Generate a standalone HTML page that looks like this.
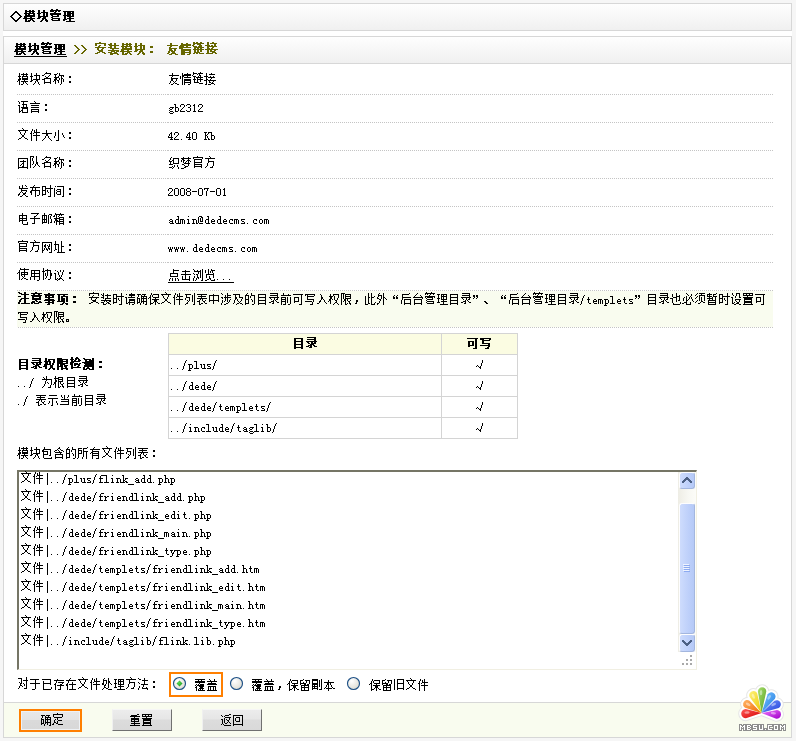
<!DOCTYPE html>
<html><head><meta charset="utf-8"><title>模块管理</title>
<style>
html,body{margin:0;padding:0}
body{width:796px;height:741px;overflow:hidden;position:relative;background:#f6f6f6;font-family:"Liberation Sans",sans-serif;font-size:12px}
.t{position:absolute;white-space:nowrap;overflow:hidden;height:14px;line-height:14px;color:transparent}
.gl{position:absolute;left:0;top:0;shape-rendering:crispEdges;pointer-events:none}
</style></head><body>
<div style="position:absolute;left:3px;top:3px;width:789px;height:735px;background:#fff"></div>
<div style="position:absolute;left:3px;top:3px;width:789px;height:28px;box-sizing:border-box;border:1px solid #d7d7d7;background:linear-gradient(#fefefe,#f0f0f0)"></div>
<div style="position:absolute;left:3px;top:36px;width:789px;height:702px;box-sizing:border-box;border:1px solid #d7d7d7;background:#fff"></div>
<div style="position:absolute;left:4px;top:37px;width:787px;height:27px;box-sizing:border-box;border-bottom:1px solid #d7d7d7;background:linear-gradient(#fefefe,#f0f0f0)"></div>
<div style="position:absolute;left:17px;top:94px;width:151px;height:1px;background:repeating-linear-gradient(to right,#c4c4c4 0 1px,transparent 1px 2px)"></div>
<div style="position:absolute;left:168px;top:94px;width:605px;height:1px;background:repeating-linear-gradient(to right,#c4c4c4 0 1px,transparent 1px 2px)"></div>
<div style="position:absolute;left:17px;top:122px;width:151px;height:1px;background:repeating-linear-gradient(to right,#c4c4c4 0 1px,transparent 1px 2px)"></div>
<div style="position:absolute;left:168px;top:122px;width:605px;height:1px;background:repeating-linear-gradient(to right,#c4c4c4 0 1px,transparent 1px 2px)"></div>
<div style="position:absolute;left:17px;top:150px;width:151px;height:1px;background:repeating-linear-gradient(to right,#c4c4c4 0 1px,transparent 1px 2px)"></div>
<div style="position:absolute;left:168px;top:150px;width:605px;height:1px;background:repeating-linear-gradient(to right,#c4c4c4 0 1px,transparent 1px 2px)"></div>
<div style="position:absolute;left:17px;top:178px;width:151px;height:1px;background:repeating-linear-gradient(to right,#c4c4c4 0 1px,transparent 1px 2px)"></div>
<div style="position:absolute;left:168px;top:178px;width:605px;height:1px;background:repeating-linear-gradient(to right,#c4c4c4 0 1px,transparent 1px 2px)"></div>
<div style="position:absolute;left:17px;top:206px;width:151px;height:1px;background:repeating-linear-gradient(to right,#c4c4c4 0 1px,transparent 1px 2px)"></div>
<div style="position:absolute;left:168px;top:206px;width:605px;height:1px;background:repeating-linear-gradient(to right,#c4c4c4 0 1px,transparent 1px 2px)"></div>
<div style="position:absolute;left:17px;top:234px;width:151px;height:1px;background:repeating-linear-gradient(to right,#c4c4c4 0 1px,transparent 1px 2px)"></div>
<div style="position:absolute;left:168px;top:234px;width:605px;height:1px;background:repeating-linear-gradient(to right,#c4c4c4 0 1px,transparent 1px 2px)"></div>
<div style="position:absolute;left:17px;top:262px;width:151px;height:1px;background:repeating-linear-gradient(to right,#c4c4c4 0 1px,transparent 1px 2px)"></div>
<div style="position:absolute;left:168px;top:262px;width:605px;height:1px;background:repeating-linear-gradient(to right,#c4c4c4 0 1px,transparent 1px 2px)"></div>
<div style="position:absolute;left:17px;top:290px;width:151px;height:1px;background:repeating-linear-gradient(to right,#c4c4c4 0 1px,transparent 1px 2px)"></div>
<div style="position:absolute;left:168px;top:290px;width:605px;height:1px;background:repeating-linear-gradient(to right,#c4c4c4 0 1px,transparent 1px 2px)"></div>
<div style="position:absolute;left:18px;top:327px;width:755px;height:1px;background:repeating-linear-gradient(to right,#c4c4c4 0 1px,transparent 1px 2px)"></div>
<div style="position:absolute;left:17px;top:291px;width:756px;height:36px;background:#f9fcef"></div>
<div style="position:absolute;left:168px;top:333px;width:350px;height:106px;box-sizing:border-box;border:1px solid #d4d4d4;background:#fff"></div>
<div style="position:absolute;left:169px;top:334px;width:348px;height:20px;background:#fbfce2"></div>
<div style="position:absolute;left:169px;top:354px;width:348px;height:1px;background:#d4d4d4"></div>
<div style="position:absolute;left:169px;top:375px;width:348px;height:1px;background:#d4d4d4"></div>
<div style="position:absolute;left:169px;top:396px;width:348px;height:1px;background:#d4d4d4"></div>
<div style="position:absolute;left:169px;top:417px;width:348px;height:1px;background:#d4d4d4"></div>
<div style="position:absolute;left:441px;top:334px;width:1px;height:104px;background:#d4d4d4"></div>
<div style="position:absolute;left:17px;top:470px;width:680px;height:200px;box-sizing:border-box;border-style:solid;border-width:2px 1px 1px 2px;border-color:#757565 #f1efe2 #f1efe2 #757565;background:#fff"></div>
<div style="position:absolute;left:4px;top:702px;width:787px;height:1px;background:#d7d7d7"></div>
<div style="position:absolute;left:4px;top:703px;width:787px;height:34px;background:#f9fcef"></div>
<div style="position:absolute;left:19px;top:709px;width:63px;height:23px;box-sizing:border-box;border:2px solid #ff7f00"></div>
<div style="position:absolute;left:21px;top:711px;width:59px;height:19px;box-sizing:border-box;border:1px solid #eef2f6;background:linear-gradient(#e8e8e8 0,#e4e4e4 45%,#dadada 50%,#d8d8d8 100%)"></div>
<div style="position:absolute;left:112px;top:709px;width:60px;height:22px;box-sizing:border-box;border-style:solid;border-width:1px 1px 1px 1px;border-color:#f6f6f6 #707070 #707070 #f0f0f0;background:linear-gradient(#ececec 0,#e6e6e6 45%,#dcdcdc 50%,#d9d9d9 100%)"></div>
<div style="position:absolute;left:202px;top:709px;width:60px;height:22px;box-sizing:border-box;border-style:solid;border-width:1px 1px 1px 1px;border-color:#f6f6f6 #707070 #707070 #f0f0f0;background:linear-gradient(#ececec 0,#e6e6e6 45%,#dcdcdc 50%,#d9d9d9 100%)"></div>
<div style="position:absolute;left:169px;top:672px;width:54px;height:25px;box-sizing:border-box;border:2px solid #ff7f00"></div>
<div style="position:absolute;left:678px;top:472px;width:18px;height:180px;background:linear-gradient(90deg,#eeede5,#f8f8f3 60%,#fcfcf8)"></div>
<div style="position:absolute;left:679px;top:472px;width:16px;height:17px;box-sizing:border-box;border:1px solid;border-color:#fdfdff #a3b6de #a3b6de #fdfdff;border-radius:3px;background:linear-gradient(90deg,#cedcfd,#bed0fa 60%,#b5c9f7)"></div>
<div style="position:absolute;left:679px;top:503px;width:16px;height:131px;box-sizing:border-box;border:1px solid;border-color:#fdfdff #a3b6de #a3b6de #fdfdff;border-radius:3px;background:linear-gradient(90deg,#cedcfd,#bed0fa 60%,#b5c9f7)"></div>
<div style="position:absolute;left:679px;top:634px;width:16px;height:18px;box-sizing:border-box;border:1px solid;border-color:#fdfdff #a3b6de #a3b6de #fdfdff;border-radius:3px;background:linear-gradient(90deg,#cedcfd,#bed0fa 60%,#b5c9f7)"></div>
<div style="position:absolute;left:14px;top:56px;width:53px;height:1px;background:#000"></div>
<div style="position:absolute;left:168px;top:282px;width:66px;height:1px;background:#000"></div>
<span class="t" style="left:23px;top:9px;width:52px">模块管理</span>
<span class="t" style="left:14px;top:42px;width:52px">模块管理</span>
<span class="t" style="left:94px;top:42px;width:65px">安装模块：</span>
<span class="t" style="left:166px;top:42px;width:52px">友情链接</span>
<span class="t" style="left:17px;top:72px;width:60px">模块名称：</span>
<span class="t" style="left:168px;top:72px;width:48px">友情链接</span>
<span class="t" style="left:17px;top:100px;width:36px">语言：</span>
<span class="t" style="left:168px;top:100px;width:36px">gb2312</span>
<span class="t" style="left:17px;top:128px;width:60px">文件大小：</span>
<span class="t" style="left:168px;top:128px;width:48px">42.40 Kb</span>
<span class="t" style="left:17px;top:156px;width:60px">团队名称：</span>
<span class="t" style="left:168px;top:156px;width:48px">织梦官方</span>
<span class="t" style="left:17px;top:184px;width:60px">发布时间：</span>
<span class="t" style="left:168px;top:184px;width:60px">2008-07-01</span>
<span class="t" style="left:17px;top:212px;width:60px">电子邮箱：</span>
<span class="t" style="left:168px;top:212px;width:102px">admin@dedecms.com</span>
<span class="t" style="left:17px;top:240px;width:60px">官方网址：</span>
<span class="t" style="left:168px;top:240px;width:90px">www.dedecms.com</span>
<span class="t" style="left:17px;top:268px;width:60px">使用协议：</span>
<span class="t" style="left:168px;top:268px;width:66px">点击浏览...</span>
<span class="t" style="left:17px;top:292px;width:65px">注意事项：</span>
<span class="t" style="left:88px;top:292px;width:678px">安装时请确保文件列表中涉及的目录前可写入权限，此外“后台管理目录”、“后台管理目录/templets”目录也必须暂时设置可</span>
<span class="t" style="left:17px;top:310px;width:60px">写入权限。</span>
<span class="t" style="left:17px;top:357px;width:91px">目录权限检测：</span>
<span class="t" style="left:17px;top:375px;width:72px">../ 为根目录</span>
<span class="t" style="left:17px;top:393px;width:90px">./ 表示当前目录</span>
<span class="t" style="left:292px;top:336px;width:26px">目录</span>
<span class="t" style="left:466px;top:336px;width:26px">可写</span>
<span class="t" style="left:170px;top:357px;width:48px">../plus/</span>
<span class="t" style="left:170px;top:378px;width:48px">../dede/</span>
<span class="t" style="left:170px;top:399px;width:102px">../dede/templets/</span>
<span class="t" style="left:170px;top:420px;width:108px">../include/taglib/</span>
<span class="t" style="left:17px;top:446px;width:144px">模块包含的所有文件列表：</span>
<span class="t" style="left:20px;top:471px;width:156px">文件|../plus/flink_add.php</span>
<span class="t" style="left:20px;top:489px;width:186px">文件|../dede/friendlink_add.php</span>
<span class="t" style="left:20px;top:507px;width:192px">文件|../dede/friendlink_edit.php</span>
<span class="t" style="left:20px;top:525px;width:192px">文件|../dede/friendlink_main.php</span>
<span class="t" style="left:20px;top:543px;width:192px">文件|../dede/friendlink_type.php</span>
<span class="t" style="left:20px;top:561px;width:240px">文件|../dede/templets/friendlink_add.htm</span>
<span class="t" style="left:20px;top:579px;width:246px">文件|../dede/templets/friendlink_edit.htm</span>
<span class="t" style="left:20px;top:597px;width:246px">文件|../dede/templets/friendlink_main.htm</span>
<span class="t" style="left:20px;top:615px;width:246px">文件|../dede/templets/friendlink_type.htm</span>
<span class="t" style="left:20px;top:633px;width:216px">文件|../include/taglib/flink.lib.php</span>
<span class="t" style="left:17px;top:677px;width:144px">对于已存在文件处理方法：</span>
<span class="t" style="left:194px;top:678px;width:24px">覆盖</span>
<span class="t" style="left:251px;top:678px;width:84px">覆盖，保留副本</span>
<span class="t" style="left:369px;top:678px;width:60px">保留旧文件</span>
<span class="t" style="left:40px;top:713px;width:24px">确定</span>
<span class="t" style="left:129px;top:713px;width:24px">重置</span>
<span class="t" style="left:220px;top:713px;width:24px">返回</span>
<svg class="gl" width="796" height="741" viewBox="0 0 796 741"><defs><path id="g0" d="M2 -1h2v1h-2zM6 -1h2v1h-2zM9 -1h2v1h-2zM2 0h10v1h-10zM2 1h2v1h-2zM6 1h2v1h-2zM9 1h2v1h-2zM1 2h11v1h-11zM2 3h2v1h-2zM5 3h2v1h-2zM10 3h2v1h-2zM2 4h10v1h-10zM1 5h11v1h-11zM1 6h3v1h-3zM7 6h2v1h-2zM0 7h12v1h-12zM2 8h2v2h-2zM7 8h3v1h-3zM5 9h3v1h-3zM9 9h2v1h-2zM2 10h5v1h-5zM10 10h2v1h-2z"/><path id="g1" d="M2 -1h2v3h-2zM7 -1h2v2h-2zM5 1h7v1h-7zM1 2h4v1h-4zM7 2h2v3h-2zM10 2h2v3h-2zM2 3h2v2h-2zM2 5h10v1h-10zM2 6h3v1h-3zM7 6h3v1h-3zM1 7h3v1h-3zM6 7h4v1h-4zM6 8h2v1h-2zM9 8h2v1h-2zM5 9h2v1h-2zM9 9h3v1h-3zM4 10h2v1h-2zM10 10h2v1h-2z"/><path id="g2" d="M2 -2h2v1h-2zM7 -2h2v1h-2zM1 -1h11v1h-11zM1 0h4v1h-4zM6 0h2v1h-2zM9 0h2v1h-2zM5 1h2v1h-2zM1 2h11v2h-11zM2 4h2v1h-2zM8 4h2v1h-2zM3 5h7v1h-7zM2 6h2v1h-2zM3 7h8v1h-8zM2 8h2v1h-2zM9 8h2v1h-2zM3 9h8v1h-8z"/><path id="g3" d="M1 0h11v1h-11zM2 1h2v3h-2zM5 1h4v1h-4zM10 1h2v1h-2zM5 2h7v1h-7zM5 3h4v1h-4zM10 3h2v2h-2zM1 4h8v1h-8zM2 5h2v3h-2zM5 5h7v1h-7zM7 6h2v1h-2zM5 7h7v1h-7zM1 8h4v1h-4zM7 8h2v2h-2zM1 9h2v1h-2zM4 10h9v1h-9z"/><path id="g4" d="M5 -2h2v1h-2zM1 -1h11v1h-11zM1 0h2v2h-2zM10 0h2v2h-2zM5 1h2v1h-2zM4 2h2v1h-2zM1 3h11v1h-11zM3 4h2v2h-2zM8 4h2v1h-2zM7 5h2v1h-2zM4 6h5v1h-5zM5 7h4v1h-4zM3 8h3v1h-3zM8 8h3v1h-3zM1 9h3v1h-3zM10 9h2v1h-2z"/><path id="g5" d="M3 -1h2v1h-2zM7 -1h2v2h-2zM1 0h4v1h-4zM2 1h10v1h-10zM3 2h2v1h-2zM7 2h2v2h-2zM1 3h4v1h-4zM3 4h9v1h-9zM5 5h2v1h-2zM1 6h11v1h-11zM4 7h4v1h-4zM9 7h3v1h-3zM1 8h4v1h-4zM7 8h3v1h-3zM3 9h8v1h-8zM3 10h3v1h-3zM10 10h2v1h-2z"/><path id="g6" d="M4 2h3v2h-3zM4 7h3v2h-3z"/><path id="g7" d="M4 -1h2v2h-2zM1 1h11v1h-11zM4 2h2v1h-2zM3 3h2v1h-2zM3 4h8v1h-8zM3 5h3v1h-3zM8 5h2v2h-2zM3 6h4v1h-4zM2 7h2v2h-2zM5 7h4v1h-4zM6 8h3v1h-3zM1 9h2v1h-2zM5 9h5v1h-5zM3 10h3v1h-3zM9 10h3v1h-3z"/><path id="g8" d="M2 -1h2v1h-2zM7 -1h2v1h-2zM2 0h10v1h-10zM1 1h11v1h-11zM0 2h5v1h-5zM7 2h2v1h-2zM0 3h12v1h-12zM0 4h4v1h-4zM2 5h10v2h-10zM2 7h4v1h-4zM10 7h2v1h-2zM2 8h10v1h-10zM2 9h4v2h-4zM10 9h2v1h-2zM8 10h3v1h-3z"/><path id="g9" d="M1 -2h2v1h-2zM4 -2h2v1h-2zM8 -2h2v1h-2zM1 -1h11v1h-11zM1 0h2v1h-2zM5 0h4v1h-4zM0 1h2v1h-2zM7 1h3v1h-3zM1 2h4v1h-4zM6 2h4v1h-4zM2 3h10v1h-10zM2 4h2v1h-2zM5 4h2v1h-2zM8 4h2v1h-2zM1 5h11v1h-11zM2 6h2v2h-2zM5 6h2v2h-2zM8 6h2v2h-2zM2 8h6v1h-6zM1 9h2v1h-2zM4 9h2v1h-2zM7 9h5v1h-5z"/><path id="g10" d="M2 -2h2v3h-2zM7 -2h2v1h-2zM5 -1h7v1h-7zM9 0h2v2h-2zM0 1h5v1h-5zM6 1h2v1h-2zM2 2h10v1h-10zM2 3h2v1h-2zM7 3h2v1h-2zM2 4h3v1h-3zM6 4h2v1h-2zM0 5h13v1h-13zM2 6h2v3h-2zM5 6h2v1h-2zM9 6h2v1h-2zM5 7h5v1h-5zM7 8h4v1h-4zM1 9h7v1h-7zM10 9h2v1h-2z"/><path id="g11" d="M2 -1h1v3h-1zM6 -1h1v1h-1zM9 -1h1v1h-1zM4 0h7v1h-7zM6 1h1v1h-1zM9 1h1v1h-1zM1 2h3v1h-3zM5 2h6v1h-6zM2 3h1v1h-1zM5 3h1v1h-1zM10 3h1v1h-1zM2 4h2v1h-2zM5 4h6v2h-6zM1 5h3v1h-3zM1 6h2v1h-2zM7 6h1v1h-1zM0 7h1v1h-1zM2 7h1v4h-1zM4 7h7v1h-7zM6 8h1v2h-1zM8 8h1v1h-1zM9 9h1v1h-1zM4 10h2v1h-2zM10 10h1v1h-1z"/><path id="g12" d="M2 -1h1v3h-1zM7 -1h1v2h-1zM5 1h6v1h-6zM1 2h3v1h-3zM7 2h1v3h-1zM10 2h1v3h-1zM2 3h1v3h-1zM4 5h7v1h-7zM2 6h2v1h-2zM7 6h2v1h-2zM1 7h2v1h-2zM6 7h1v2h-1zM8 7h1v1h-1zM9 8h1v2h-1zM5 9h1v1h-1zM4 10h1v1h-1zM10 10h1v1h-1z"/><path id="g13" d="M5 -2h1v1h-1zM4 -1h6v1h-6zM3 0h1v1h-1zM9 0h1v1h-1zM1 1h2v1h-2zM8 1h1v1h-1zM4 2h1v1h-1zM7 2h1v1h-1zM5 3h2v1h-2zM3 4h7v1h-7zM1 5h3v1h-3zM9 5h1v3h-1zM3 6h1v2h-1zM3 8h7v1h-7zM3 9h1v1h-1zM9 9h1v1h-1z"/><path id="g14" d="M4 -1h1v1h-1zM6 -1h1v2h-1zM1 0h3v1h-3zM2 1h1v2h-1zM6 1h5v1h-5zM5 2h1v1h-1zM8 2h1v2h-1zM10 2h1v1h-1zM1 3h5v1h-5zM2 4h2v1h-2zM6 4h1v2h-1zM8 4h2v1h-2zM1 5h3v1h-3zM8 5h1v5h-1zM10 5h1v3h-1zM1 6h2v1h-2zM4 6h2v1h-2zM0 7h1v1h-1zM2 7h1v3h-1zM5 7h1v2h-1zM7 10h1v1h-1z"/><path id="g15" d="M4 2h2v2h-2zM4 7h2v2h-2z"/><path id="g16" d="M4 -1h1v2h-1zM1 1h10v1h-10zM4 2h1v1h-1zM3 3h1v1h-1zM3 4h7v1h-7zM3 5h2v2h-2zM8 5h1v2h-1zM2 7h1v2h-1zM5 7h1v1h-1zM7 7h1v1h-1zM6 8h1v1h-1zM1 9h1v1h-1zM5 9h1v1h-1zM7 9h2v1h-2zM3 10h2v1h-2zM9 10h2v1h-2z"/><path id="g17" d="M2 -1h1v2h-1zM7 -1h1v1h-1zM4 0h7v1h-7zM2 1h9v1h-9zM0 2h1v3h-1zM2 2h2v1h-2zM7 2h1v1h-1zM2 3h1v8h-1zM4 3h7v1h-7zM4 5h7v2h-7zM4 7h1v1h-1zM10 7h1v1h-1zM4 8h7v1h-7zM4 9h1v2h-1zM10 9h1v1h-1zM8 10h2v1h-2z"/><path id="g18" d="M1 -2h1v1h-1zM8 -2h1v1h-1zM1 -1h4v1h-4zM6 -1h5v1h-5zM1 0h1v1h-1zM5 0h1v1h-1zM7 0h1v1h-1zM0 1h1v1h-1zM7 1h2v1h-2zM1 2h3v1h-3zM6 2h1v1h-1zM8 2h1v1h-1zM2 3h1v2h-1zM4 3h7v1h-7zM5 4h1v1h-1zM8 4h1v1h-1zM1 5h3v1h-3zM5 5h6v1h-6zM2 6h1v2h-1zM5 6h1v2h-1zM8 6h1v2h-1zM2 8h5v1h-5zM7 9h4v1h-4z"/><path id="g19" d="M2 -1h1v3h-1zM7 -1h1v1h-1zM5 0h6v1h-6zM0 2h4v1h-4zM6 2h1v1h-1zM9 2h1v1h-1zM2 3h1v2h-1zM4 3h7v1h-7zM7 4h1v1h-1zM2 5h2v1h-2zM6 5h1v1h-1zM0 6h3v1h-3zM4 6h8v1h-8zM2 7h1v3h-1zM5 7h1v1h-1zM9 7h1v1h-1zM5 8h2v1h-2zM8 8h1v1h-1zM7 9h3v1h-3zM1 10h2v1h-2zM4 10h3v1h-3zM10 10h1v1h-1z"/><path id="g20" d="M1 -1h1v1h-1zM4 -1h7v1h-7zM2 0h1v2h-1zM6 0h1v2h-1zM5 2h5v1h-5zM1 3h2v1h-2zM6 3h1v2h-1zM9 3h1v2h-1zM2 4h1v5h-1zM4 5h7v1h-7zM5 6h6v1h-6zM5 7h1v1h-1zM10 7h1v3h-1zM4 8h2v1h-2zM2 9h2v1h-2zM5 9h1v1h-1zM2 10h1v1h-1zM5 10h6v1h-6z"/><path id="g21" d="M5 -1h1v1h-1zM6 0h1v1h-1zM1 1h10v1h-10zM2 3h8v1h-8zM2 5h8v1h-8zM2 7h8v1h-8zM2 8h1v1h-1zM9 8h1v1h-1zM2 9h8v1h-8zM2 10h1v1h-1zM9 10h1v1h-1z"/><path id="g22" d="M2 5h4v1h-4zM1 6h1v1h-1zM4 6h1v1h-1zM2 7h2v1h-2zM1 8h1v1h-1zM2 9h3v1h-3zM1 10h1v1h-1zM5 10h1v1h-1zM2 11h3v1h-3z"/><path id="g23" d="M0 2h2v1h-2zM1 3h1v2h-1zM1 5h3v1h-3zM1 6h1v3h-1zM4 6h1v3h-1zM1 9h3v1h-3z"/><path id="g24" d="M1 2h3v1h-3zM0 3h1v2h-1zM4 3h1v2h-1zM3 5h1v1h-1zM2 6h1v1h-1zM1 7h1v1h-1zM0 8h1v1h-1zM0 9h5v1h-5z"/><path id="g25" d="M1 2h3v1h-3zM0 3h1v1h-1zM4 3h1v2h-1zM2 5h2v1h-2zM4 6h1v3h-1zM0 8h1v1h-1zM1 9h3v1h-3z"/><path id="g26" d="M2 2h1v1h-1zM1 3h2v1h-2zM2 4h1v5h-1zM1 9h3v1h-3z"/><path id="g27" d="M5 -2h1v1h-1zM6 -1h1v1h-1zM1 0h10v1h-10zM2 1h1v1h-1zM8 1h1v2h-1zM3 2h1v2h-1zM7 3h1v2h-1zM4 4h1v1h-1zM5 5h2v2h-2zM4 7h1v1h-1zM7 7h1v1h-1zM2 8h2v1h-2zM8 8h2v1h-2zM1 9h1v1h-1zM10 9h1v1h-1z"/><path id="g28" d="M3 -1h1v2h-1zM7 -1h1v3h-1zM5 0h1v2h-1zM2 1h1v2h-1zM5 2h6v1h-6zM1 3h2v1h-2zM4 3h1v1h-1zM7 3h1v2h-1zM2 4h1v7h-1zM4 5h7v1h-7zM7 6h1v5h-1z"/><path id="g29" d="M5 0h1v3h-1zM1 3h10v1h-10zM5 4h2v2h-2zM4 6h1v2h-1zM7 6h1v2h-1zM3 8h1v1h-1zM8 8h1v1h-1zM2 9h1v1h-1zM9 9h1v1h-1zM1 10h1v1h-1zM10 10h1v1h-1z"/><path id="g30" d="M5 0h1v10h-1zM2 2h1v4h-1zM9 3h1v2h-1zM10 5h1v2h-1zM1 6h1v2h-1zM11 7h1v1h-1zM3 10h3v1h-3z"/><path id="g31" d="M3 2h1v1h-1zM2 3h2v1h-2zM1 4h1v2h-1zM3 4h1v3h-1zM0 6h1v1h-1zM0 7h5v1h-5zM3 8h1v1h-1zM2 9h3v1h-3z"/><path id="g32" d="M1 9h1v1h-1z"/><path id="g33" d="M1 2h3v1h-3zM0 3h1v6h-1zM4 3h1v6h-1zM1 9h3v1h-3z"/><path id="g34" d="M0 2h3v1h-3zM4 2h2v1h-2zM1 3h1v2h-1zM4 3h1v1h-1zM3 4h1v1h-1zM1 5h2v1h-2zM1 6h1v3h-1zM3 6h1v2h-1zM4 8h1v1h-1zM0 9h3v1h-3zM4 9h2v1h-2z"/><path id="g35" d="M1 0h10v1h-10zM1 1h1v8h-1zM10 1h1v8h-1zM6 2h1v1h-1zM3 3h6v1h-6zM6 4h1v1h-1zM5 5h2v1h-2zM4 6h1v1h-1zM6 6h1v2h-1zM3 7h1v1h-1zM5 8h2v1h-2zM1 9h10v1h-10zM1 10h1v1h-1zM10 10h1v1h-1z"/><path id="g36" d="M1 -2h4v1h-4zM7 -2h1v6h-1zM1 -1h1v11h-1zM4 -1h1v1h-1zM3 0h1v3h-1zM4 3h1v3h-1zM7 4h2v2h-2zM3 6h1v1h-1zM6 6h1v2h-1zM8 6h1v1h-1zM9 7h1v1h-1zM5 8h1v1h-1zM10 8h1v1h-1zM4 9h1v1h-1z"/><path id="g37" d="M3 -1h1v1h-1zM2 0h1v2h-1zM5 0h6v1h-6zM5 1h1v1h-1zM10 1h1v4h-1zM1 2h1v1h-1zM4 2h2v1h-2zM1 3h3v1h-3zM5 3h1v2h-1zM2 4h1v2h-1zM5 5h6v1h-6zM1 6h4v1h-4zM6 7h1v2h-1zM9 7h1v2h-1zM4 8h1v1h-1zM1 9h3v1h-3zM5 9h1v1h-1zM10 9h1v2h-1zM4 10h1v1h-1z"/><path id="g38" d="M3 -1h1v1h-1zM8 -1h1v1h-1zM1 0h10v1h-10zM2 1h2v1h-2zM8 1h1v1h-1zM1 2h1v2h-1zM3 2h2v1h-2zM7 2h3v1h-3zM3 3h1v2h-1zM6 3h1v1h-1zM8 3h1v2h-1zM10 3h1v1h-1zM5 4h1v1h-1zM4 5h6v1h-6zM2 6h2v1h-2zM8 6h1v2h-1zM4 7h1v1h-1zM5 8h3v1h-3zM4 9h2v1h-2zM1 10h3v1h-3z"/><path id="g39" d="M5 -2h1v1h-1zM1 -1h10v1h-10zM1 0h1v1h-1zM10 0h1v1h-1zM2 1h8v1h-8zM2 2h1v2h-1zM9 2h1v2h-1zM2 4h8v1h-8zM2 5h1v1h-1zM2 6h8v1h-8zM2 7h1v1h-1zM9 7h1v1h-1zM2 8h8v1h-8zM2 9h1v1h-1zM9 9h1v1h-1z"/><path id="g40" d="M5 -2h1v1h-1zM6 -1h1v1h-1zM1 0h10v1h-10zM4 1h1v2h-1zM4 3h6v1h-6zM4 4h1v1h-1zM9 4h1v4h-1zM3 5h1v3h-1zM2 8h1v1h-1zM8 8h1v1h-1zM1 9h1v1h-1zM6 9h3v1h-3z"/><path id="g41" d="M5 -1h1v3h-1zM8 -1h1v1h-1zM2 0h1v2h-1zM9 0h1v1h-1zM2 2h9v1h-9zM4 3h1v1h-1zM4 4h6v1h-6zM4 5h1v1h-1zM9 5h1v1h-1zM3 6h1v1h-1zM5 6h1v1h-1zM8 6h1v1h-1zM2 7h1v1h-1zM6 7h3v1h-3zM1 8h2v1h-2zM6 8h2v1h-2zM1 9h1v1h-1zM5 9h1v1h-1zM8 9h1v1h-1zM3 10h2v1h-2zM9 10h2v1h-2z"/><path id="g42" d="M5 -1h1v1h-1zM4 0h1v1h-1zM1 1h10v1h-10zM3 2h1v2h-1zM6 2h1v2h-1zM2 4h9v1h-9zM1 5h2v2h-2zM6 5h1v6h-1zM10 5h1v4h-1zM2 7h1v2h-1zM8 9h2v1h-2z"/><path id="g43" d="M9 -1h1v3h-1zM1 0h4v1h-4zM1 1h1v3h-1zM4 1h1v1h-1zM4 2h8v1h-8zM4 3h1v1h-1zM9 3h1v7h-1zM1 4h4v1h-4zM6 4h1v2h-1zM1 5h1v3h-1zM4 5h1v3h-1zM7 6h1v1h-1zM1 8h4v1h-4zM1 9h1v1h-1zM7 10h3v1h-3z"/><path id="g44" d="M2 0h1v1h-1zM4 0h7v1h-7zM10 1h1v9h-1zM1 2h1v9h-1zM4 3h4v1h-4zM3 4h1v1h-1zM7 4h1v1h-1zM4 5h4v1h-4zM3 6h1v2h-1zM7 6h1v2h-1zM4 8h4v1h-4zM9 10h2v1h-2z"/><path id="g45" d="M1 2h3v1h-3zM0 3h1v2h-1zM4 3h1v2h-1zM1 5h3v1h-3zM0 6h1v3h-1zM4 6h1v3h-1zM1 9h3v1h-3z"/><path id="g46" d="M0 5h5v1h-5z"/><path id="g47" d="M0 2h5v1h-5zM0 3h1v1h-1zM3 3h1v2h-1zM2 5h1v5h-1z"/><path id="g48" d="M5 -1h1v2h-1zM2 1h8v1h-8zM2 2h1v2h-1zM5 2h1v2h-1zM9 2h1v2h-1zM2 4h8v1h-8zM2 5h1v1h-1zM5 5h1v1h-1zM9 5h1v1h-1zM2 6h8v1h-8zM2 7h1v1h-1zM5 7h1v3h-1zM10 8h1v2h-1zM6 10h5v1h-5z"/><path id="g49" d="M2 -1h8v1h-8zM8 0h1v1h-1zM7 1h1v1h-1zM5 2h2v1h-2zM5 3h1v1h-1zM1 4h10v1h-10zM5 5h1v4h-1zM3 9h3v1h-3z"/><path id="g50" d="M3 -1h1v2h-1zM8 0h3v1h-3zM1 1h5v1h-5zM7 1h1v9h-1zM10 1h1v1h-1zM1 2h1v3h-1zM3 2h1v3h-1zM5 2h1v3h-1zM9 2h1v3h-1zM1 5h5v1h-5zM10 5h1v3h-1zM1 6h1v2h-1zM3 6h1v2h-1zM5 6h1v2h-1zM1 8h5v1h-5zM9 8h2v1h-2zM1 9h1v1h-1z"/><path id="g51" d="M2 -1h1v1h-1zM7 -1h1v1h-1zM2 0h9v1h-9zM1 1h1v1h-1zM3 1h1v3h-1zM6 1h1v1h-1zM8 1h1v1h-1zM0 2h2v1h-2zM5 2h1v1h-1zM6 3h5v1h-5zM1 4h6v1h-6zM10 4h1v1h-1zM2 5h2v1h-2zM6 5h5v1h-5zM2 6h3v1h-3zM6 6h1v1h-1zM10 6h1v1h-1zM1 7h1v2h-1zM3 7h8v1h-8zM3 8h1v3h-1zM6 8h1v1h-1zM10 8h1v1h-1zM6 9h5v1h-5zM6 10h1v1h-1zM10 10h1v1h-1z"/><path id="g52" d="M2 5h2v1h-2zM1 6h1v1h-1zM4 6h1v1h-1zM2 7h3v1h-3zM1 8h1v1h-1zM4 8h1v1h-1zM2 9h4v1h-4z"/><path id="g53" d="M3 2h2v1h-2zM4 3h1v2h-1zM2 5h3v1h-3zM1 6h1v3h-1zM4 6h1v3h-1zM2 9h4v1h-4z"/><path id="g54" d="M0 5h4v1h-4zM0 6h1v4h-1zM2 6h1v4h-1zM4 6h1v4h-1z"/><path id="g55" d="M2 2h1v1h-1zM1 5h2v1h-2zM2 6h1v3h-1zM1 9h3v1h-3z"/><path id="g56" d="M0 5h4v1h-4zM1 6h1v3h-1zM4 6h1v3h-1zM0 9h3v1h-3zM4 9h2v1h-2z"/><path id="g57" d="M1 2h3v1h-3zM0 3h1v6h-1zM3 3h2v1h-2zM2 4h1v3h-1zM4 4h1v3h-1zM2 7h3v1h-3zM1 9h4v1h-4z"/><path id="g58" d="M2 5h2v1h-2zM1 6h1v1h-1zM4 6h1v1h-1zM1 7h4v1h-4zM1 8h1v1h-1zM2 9h3v1h-3z"/><path id="g59" d="M2 5h3v1h-3zM1 6h1v3h-1zM4 6h1v1h-1zM2 9h3v1h-3z"/><path id="g60" d="M1 5h4v1h-4zM1 6h1v1h-1zM2 7h2v1h-2zM4 8h1v1h-1zM1 9h4v1h-4z"/><path id="g61" d="M2 5h2v1h-2zM1 6h1v3h-1zM4 6h1v3h-1zM2 9h2v1h-2z"/><path id="g62" d="M1 0h10v1h-10zM1 1h1v7h-1zM10 1h1v9h-1zM4 2h1v1h-1zM8 2h1v2h-1zM3 3h2v2h-2zM6 3h1v1h-1zM7 4h2v1h-2zM4 5h1v1h-1zM7 5h1v1h-1zM3 6h1v2h-1zM5 6h1v1h-1zM7 6h2v1h-2zM5 7h2v1h-2zM8 7h1v1h-1zM1 8h2v1h-2zM6 8h1v1h-1zM1 9h1v2h-1zM8 10h3v1h-3z"/><path id="g63" d="M2 -1h1v3h-1zM8 -1h1v5h-1zM1 2h5v1h-5zM2 3h1v4h-1zM5 3h1v7h-1zM8 4h3v1h-3zM8 5h1v5h-1zM2 7h2v1h-2zM1 8h1v1h-1zM4 10h8v1h-8z"/><path id="g64" d="M0 5h1v2h-1zM2 5h1v2h-1zM4 5h1v2h-1zM1 7h3v1h-3zM1 8h1v2h-1zM3 8h1v2h-1z"/><path id="g65" d="M3 -2h1v1h-1zM7 -2h1v1h-1zM3 -1h9v1h-9zM2 0h1v2h-1zM7 0h1v2h-1zM1 2h2v1h-2zM4 2h7v1h-7zM0 3h1v1h-1zM2 3h1v7h-1zM4 3h1v1h-1zM7 3h1v1h-1zM10 3h1v1h-1zM4 4h7v1h-7zM4 5h1v1h-1zM7 5h1v2h-1zM5 6h1v1h-1zM6 7h1v1h-1zM5 8h1v1h-1zM7 8h2v1h-2zM4 9h1v1h-1zM9 9h2v1h-2z"/><path id="g66" d="M2 0h9v1h-9zM2 1h1v2h-1zM5 1h1v2h-1zM10 1h1v2h-1zM2 3h9v1h-9zM2 4h1v2h-1zM5 4h1v2h-1zM10 4h1v2h-1zM2 6h9v1h-9zM1 7h1v3h-1zM5 7h1v3h-1zM10 7h1v3h-1zM8 10h2v1h-2z"/><path id="g67" d="M2 -2h1v3h-1zM6 -1h1v1h-1zM4 0h6v1h-6zM1 1h3v1h-3zM6 1h1v5h-1zM9 1h1v2h-1zM2 2h1v8h-1zM4 3h1v3h-1zM9 3h2v3h-2zM5 6h1v2h-1zM9 6h1v3h-1zM4 8h1v1h-1zM7 9h2v1h-2z"/><path id="g68" d="M2 0h1v1h-1zM7 0h1v2h-1zM10 0h1v2h-1zM4 1h1v1h-1zM5 2h1v3h-1zM9 2h1v3h-1zM1 3h2v1h-2zM2 4h1v5h-1zM6 5h1v2h-1zM8 5h1v2h-1zM7 7h1v1h-1zM4 8h1v1h-1zM6 8h3v1h-3zM2 9h2v1h-2zM5 9h2v1h-2zM9 9h1v1h-1zM4 10h1v1h-1zM10 10h1v1h-1z"/><path id="g69" d="M5 -1h1v1h-1zM5 0h6v1h-6zM5 1h1v2h-1zM2 3h8v1h-8zM2 4h1v2h-1zM9 4h1v2h-1zM2 6h8v1h-8zM2 8h1v1h-1zM4 8h1v3h-1zM7 8h1v3h-1zM9 8h1v1h-1zM1 9h1v2h-1zM10 9h1v2h-1z"/><path id="g70" d="M5 0h1v1h-1zM2 1h8v1h-8zM5 2h1v2h-1zM1 4h10v1h-10zM5 5h1v4h-1zM2 6h1v3h-1zM9 6h1v3h-1zM2 9h8v1h-8zM9 10h1v1h-1z"/><path id="g71" d="M1 -1h1v1h-1zM10 -1h1v11h-1zM2 0h1v1h-1zM5 0h1v1h-1zM8 0h1v1h-1zM2 1h7v1h-7zM6 2h1v2h-1zM8 2h1v6h-1zM1 3h1v1h-1zM2 4h1v1h-1zM4 4h2v1h-2zM5 5h1v2h-1zM2 6h1v2h-1zM5 7h2v1h-2zM1 8h1v3h-1zM4 8h1v2h-1zM6 8h1v1h-1zM3 10h1v1h-1zM9 10h2v1h-2z"/><path id="g72" d="M4 -1h1v5h-1zM7 -1h1v1h-1zM1 0h1v3h-1zM7 0h4v1h-4zM6 1h1v2h-1zM8 1h1v2h-1zM9 3h1v1h-1zM2 4h8v1h-8zM2 5h1v3h-1zM9 5h1v3h-1zM5 6h1v2h-1zM5 8h2v1h-2zM3 9h2v1h-2zM6 9h1v1h-1zM10 9h1v1h-1zM1 10h2v1h-2zM7 10h4v1h-4z"/><path id="g73" d="M1 -2h2v1h-2zM7 -2h2v2h-2zM2 -1h3v1h-3zM4 0h8v1h-8zM7 1h2v3h-2zM1 2h3v1h-3zM4 4h8v1h-8zM3 5h2v1h-2zM7 5h2v4h-2zM2 6h2v2h-2zM1 8h2v2h-2zM4 9h9v1h-9z"/><path id="g74" d="M5 -2h2v1h-2zM1 -1h11v1h-11zM3 0h2v1h-2zM8 0h2v1h-2zM1 1h11v1h-11zM2 2h9v1h-9zM2 3h2v1h-2zM9 3h2v1h-2zM2 4h9v2h-9zM5 6h2v1h-2zM2 7h3v1h-3zM6 7h2v1h-2zM9 7h2v1h-2zM1 8h4v1h-4zM8 8h4v1h-4zM1 9h2v1h-2zM4 9h5v1h-5z"/><path id="g75" d="M5 -1h2v1h-2zM1 0h11v1h-11zM2 1h9v1h-9zM2 2h2v1h-2zM5 2h2v1h-2zM9 2h2v1h-2zM2 3h9v1h-9zM5 4h2v1h-2zM2 5h9v1h-9zM1 6h11v1h-11zM5 7h2v1h-2zM9 7h2v1h-2zM2 8h9v1h-9zM5 9h2v1h-2zM9 9h2v1h-2zM4 10h3v1h-3z"/><path id="g76" d="M1 0h11v1h-11zM2 1h2v6h-2zM7 1h2v1h-2zM5 2h7v1h-7zM5 3h2v1h-2zM10 3h2v5h-2zM5 4h4v3h-4zM1 7h8v1h-8zM7 8h2v1h-2zM6 9h2v1h-2zM9 9h3v1h-3zM4 10h3v1h-3zM10 10h2v1h-2z"/><path id="g77" d="M5 -2h1v1h-1zM1 -1h10v1h-10zM1 0h1v2h-1zM10 0h1v2h-1zM5 1h1v1h-1zM4 2h1v1h-1zM1 3h10v1h-10zM3 4h1v2h-1zM8 4h1v1h-1zM7 5h1v1h-1zM4 6h4v1h-4zM5 7h3v1h-3zM3 8h2v1h-2zM8 8h2v1h-2zM1 9h2v1h-2zM10 9h1v1h-1z"/><path id="g78" d="M3 -1h1v2h-1zM1 0h1v1h-1zM7 0h1v1h-1zM2 1h2v1h-2zM5 1h6v1h-6zM3 2h1v1h-1zM7 2h1v2h-1zM1 3h3v1h-3zM3 4h1v1h-1zM5 4h6v1h-6zM5 5h1v1h-1zM1 6h10v1h-10zM4 7h1v1h-1zM6 7h1v1h-1zM9 7h2v1h-2zM1 8h3v1h-3zM7 8h2v1h-2zM3 9h1v1h-1zM6 9h1v1h-1zM8 9h2v1h-2zM3 10h3v1h-3zM10 10h1v1h-1z"/><path id="g79" d="M7 -1h1v1h-1zM2 0h1v1h-1zM5 0h6v2h-6zM7 2h1v1h-1zM1 3h2v1h-2zM4 3h7v1h-7zM2 4h1v5h-1zM5 5h6v2h-6zM5 7h1v1h-1zM10 7h1v1h-1zM4 8h7v1h-7zM2 9h2v1h-2zM5 9h1v2h-1zM10 9h1v1h-1zM8 10h2v1h-2z"/><path id="g80" d="M1 0h4v1h-4zM6 0h4v1h-4zM2 1h1v2h-1zM5 1h1v1h-1zM8 1h1v1h-1zM5 2h6v1h-6zM1 3h1v1h-1zM5 3h1v1h-1zM7 3h1v1h-1zM10 3h1v1h-1zM1 4h3v1h-3zM5 4h6v1h-6zM1 5h1v3h-1zM3 5h1v3h-1zM5 5h1v2h-1zM7 5h1v2h-1zM10 5h1v2h-1zM5 7h6v1h-6zM1 8h3v1h-3zM5 8h1v1h-1zM7 8h1v2h-1zM10 8h1v2h-1zM1 9h1v1h-1zM4 9h1v2h-1zM9 10h2v1h-2z"/><path id="g81" d="M3 -1h1v2h-1zM5 0h6v1h-6zM2 1h1v2h-1zM4 1h1v2h-1zM10 1h1v2h-1zM1 3h2v1h-2zM5 3h6v1h-6zM0 4h1v1h-1zM2 4h1v5h-1zM7 4h1v1h-1zM4 5h7v1h-7zM6 6h3v2h-3zM5 8h1v1h-1zM7 8h1v3h-1zM9 8h1v1h-1zM2 9h3v1h-3zM10 9h2v1h-2zM2 10h1v1h-1z"/><path id="g82" d="M10 -1h1v11h-1zM1 0h6v1h-6zM2 1h1v2h-1zM8 1h1v7h-1zM2 3h4v1h-4zM1 4h1v2h-1zM5 4h1v3h-1zM3 6h1v1h-1zM4 7h1v1h-1zM3 8h1v1h-1zM2 9h2v1h-2zM1 10h1v1h-1zM9 10h2v1h-2z"/><path id="g83" d="M1 0h10v1h-10zM5 1h1v1h-1zM2 2h8v1h-8zM5 3h1v1h-1zM1 4h10v1h-10zM4 5h1v1h-1zM6 5h1v2h-1zM3 6h1v1h-1zM9 6h1v1h-1zM1 7h3v1h-3zM7 7h2v1h-2zM3 8h1v2h-1zM8 8h1v1h-1zM5 9h2v1h-2zM9 9h2v1h-2zM3 10h2v1h-2z"/><path id="g84" d="M5 0h1v1h-1zM1 1h10v1h-10zM1 2h1v4h-1zM5 2h1v4h-1zM10 2h1v4h-1zM1 6h10v1h-10zM1 7h1v1h-1zM5 7h1v3h-1zM10 7h1v1h-1z"/><path id="g85" d="M1 -1h1v1h-1zM7 -1h1v2h-1zM2 0h1v1h-1zM5 1h1v2h-1zM7 1h4v1h-4zM7 2h1v1h-1zM1 3h2v1h-2zM4 3h7v1h-7zM2 4h1v1h-1zM5 4h1v3h-1zM7 4h1v4h-1zM10 5h1v1h-1zM2 6h1v3h-1zM9 6h1v2h-1zM4 7h1v1h-1zM8 8h1v1h-1zM1 9h1v2h-1zM6 9h2v1h-2zM4 10h2v1h-2z"/><path id="g86" d="M1 0h7v1h-7zM3 1h1v2h-1zM7 1h1v2h-1zM3 3h2v2h-2zM7 3h4v1h-4zM10 4h1v1h-1zM3 5h1v1h-1zM5 5h1v2h-1zM9 5h1v2h-1zM2 6h1v3h-1zM6 7h1v1h-1zM8 7h1v1h-1zM7 8h1v1h-1zM1 9h1v1h-1zM5 9h2v1h-2zM8 9h2v1h-2zM4 10h1v1h-1zM10 10h1v1h-1z"/><path id="g87" d="M3 -1h1v1h-1zM7 -1h1v2h-1zM2 0h1v1h-1zM1 1h4v1h-4zM7 1h4v1h-4zM1 2h1v3h-1zM4 2h1v3h-1zM6 2h1v2h-1zM10 2h1v8h-1zM1 5h4v1h-4zM7 5h1v1h-1zM1 6h1v3h-1zM4 6h1v3h-1zM8 6h1v2h-1zM1 9h4v1h-4zM1 10h1v1h-1zM8 10h2v1h-2z"/><path id="g88" d="M2 0h8v1h-8zM2 1h1v2h-1zM9 1h1v2h-1zM2 3h8v1h-8zM2 4h1v2h-1zM9 4h1v2h-1zM2 6h8v1h-8zM2 7h1v2h-1zM9 7h1v2h-1zM2 9h8v1h-8zM2 10h1v1h-1zM9 10h1v1h-1z"/><path id="g89" d="M2 -1h8v1h-8zM9 0h1v1h-1zM2 1h8v1h-8zM9 2h1v1h-1zM1 3h10v1h-10zM2 4h1v1h-1zM6 4h1v2h-1zM9 4h1v1h-1zM3 5h1v1h-1zM8 5h2v1h-2zM5 6h1v1h-1zM7 6h1v1h-1zM3 7h3v1h-3zM8 7h1v1h-1zM1 8h2v1h-2zM5 8h1v1h-1zM9 8h2v1h-2zM4 9h2v1h-2z"/><path id="g90" d="M3 -1h1v2h-1zM8 0h1v1h-1zM1 1h10v1h-10zM1 3h5v1h-5zM7 3h1v6h-1zM10 3h1v7h-1zM1 4h1v1h-1zM5 4h1v1h-1zM1 5h5v1h-5zM1 6h1v1h-1zM5 6h1v1h-1zM1 7h5v1h-5zM1 8h1v3h-1zM5 8h1v2h-1zM3 10h3v1h-3zM8 10h2v1h-2z"/><path id="g91" d="M1 0h10v1h-10zM9 1h1v9h-1zM2 3h5v1h-5zM2 4h1v3h-1zM6 4h1v3h-1zM2 7h5v1h-5zM2 8h1v1h-1zM7 10h3v1h-3z"/><path id="g92" d="M1 0h10v1h-10zM1 1h1v1h-1zM3 1h1v1h-1zM10 1h1v1h-1zM3 2h7v1h-7zM3 3h1v2h-1zM3 5h7v1h-7zM9 6h1v2h-1zM1 7h7v1h-7zM8 8h1v2h-1zM6 10h3v1h-3z"/><path id="g93" d="M4 0h1v1h-1zM5 1h1v2h-1zM5 3h2v2h-2zM5 5h1v1h-1zM7 5h1v1h-1zM4 6h1v1h-1zM8 6h1v2h-1zM3 7h2v1h-2zM3 8h1v1h-1zM9 8h1v1h-1zM1 9h2v1h-2zM10 9h1v1h-1z"/><path id="g94" d="M2 0h1v2h-1zM5 0h6v1h-6zM5 1h1v1h-1zM10 1h1v3h-1zM1 2h4v1h-4zM6 2h1v4h-1zM2 3h2v2h-2zM9 4h1v2h-1zM1 5h2v2h-2zM4 5h1v1h-1zM7 6h2v1h-2zM0 7h1v1h-1zM2 7h1v3h-1zM8 7h1v1h-1zM7 8h2v1h-2zM6 9h1v1h-1zM9 9h1v1h-1zM5 10h1v1h-1zM10 10h1v1h-1z"/><path id="g95" d="M1 -1h4v1h-4zM1 0h1v11h-1zM3 0h1v5h-1zM5 0h6v1h-6zM5 1h1v1h-1zM10 1h1v1h-1zM5 2h6v1h-6zM5 3h1v1h-1zM10 3h1v1h-1zM5 4h6v1h-6zM4 5h2v2h-2zM7 5h1v2h-1zM10 6h1v1h-1zM3 7h1v1h-1zM5 7h1v3h-1zM8 7h2v1h-2zM9 8h1v1h-1zM7 9h1v1h-1zM9 9h2v1h-2zM5 10h2v1h-2zM10 10h1v1h-1z"/><path id="g96" d="M4 6h2v2h-2zM4 8h1v1h-1zM3 9h2v1h-2z"/><path id="g97" d="M4 -1h1v4h-1zM7 -1h1v4h-1zM1 2h1v8h-1zM10 2h1v1h-1zM4 3h2v1h-2zM7 3h3v1h-3zM4 4h1v5h-1zM7 4h1v6h-1zM11 8h1v1h-1zM4 9h2v1h-2zM10 9h1v1h-1zM1 10h3v1h-3zM7 10h4v1h-4z"/><path id="g98" d="M3 -1h1v1h-1zM7 -1h1v4h-1zM2 0h1v1h-1zM2 1h4v1h-4zM2 2h1v1h-1zM5 2h1v3h-1zM1 3h1v1h-1zM7 3h2v1h-2zM1 4h2v1h-2zM7 4h1v7h-1zM9 4h1v1h-1zM3 5h2v1h-2zM10 5h1v1h-1zM4 6h1v1h-1zM3 7h1v2h-1zM1 9h2v1h-2zM1 10h1v1h-1z"/><path id="g99" d="M6 1h1v1h-1zM9 1h1v1h-1zM5 2h1v1h-1zM8 2h1v1h-1zM5 3h2v2h-2zM8 3h2v2h-2z"/><path id="g100" d="M9 -1h1v1h-1zM2 0h7v1h-7zM2 1h1v2h-1zM2 3h9v1h-9zM2 4h1v2h-1zM4 5h7v1h-7zM1 6h1v4h-1zM4 6h1v3h-1zM10 6h1v3h-1zM4 9h7v1h-7zM4 10h1v1h-1zM10 10h1v1h-1z"/><path id="g101" d="M5 -1h1v1h-1zM4 0h1v1h-1zM3 1h1v1h-1zM8 1h1v1h-1zM2 2h1v1h-1zM9 2h1v1h-1zM1 3h10v1h-10zM10 4h1v1h-1zM2 5h8v1h-8zM2 6h1v3h-1zM9 6h1v3h-1zM2 9h8v1h-8zM2 10h1v1h-1zM9 10h1v1h-1z"/><path id="g102" d="M2 -2h1v1h-1zM7 -2h1v1h-1zM1 -1h10v1h-10zM1 0h1v1h-1zM3 0h1v1h-1zM6 0h1v1h-1zM9 0h1v1h-1zM5 1h1v1h-1zM1 2h10v1h-10zM1 3h1v1h-1zM3 3h6v1h-6zM10 3h1v1h-1zM2 4h1v1h-1zM8 4h1v1h-1zM3 5h6v1h-6zM2 6h1v1h-1zM3 7h7v1h-7zM2 8h1v1h-1zM9 8h1v1h-1zM3 9h7v1h-7z"/><path id="g103" d="M1 0h3v1h-3zM5 0h6v1h-6zM2 1h1v3h-1zM5 1h1v1h-1zM7 1h1v1h-1zM10 1h1v1h-1zM5 2h6v1h-6zM5 3h1v2h-1zM7 3h1v2h-1zM10 3h1v2h-1zM1 4h3v1h-3zM2 5h1v3h-1zM5 5h6v1h-6zM7 6h1v1h-1zM5 7h6v1h-6zM1 8h3v1h-3zM7 8h1v2h-1zM4 10h8v1h-8z"/><path id="g104" d="M1 1h2v2h-2zM4 1h2v2h-2zM2 3h1v1h-1zM5 3h1v1h-1zM1 4h1v1h-1zM4 4h1v1h-1z"/><path id="g105" d="M0 7h2v1h-2zM1 8h2v1h-2zM2 9h2v1h-2z"/><path id="g106" d="M4 1h1v1h-1zM3 2h1v2h-1zM2 4h1v3h-1zM1 7h1v3h-1zM0 10h1v1h-1z"/><path id="g107" d="M2 3h1v2h-1zM1 5h3v1h-3zM2 6h1v3h-1zM3 9h2v1h-2z"/><path id="g108" d="M0 5h4v1h-4zM1 6h1v3h-1zM4 6h1v3h-1zM1 9h3v1h-3zM1 10h1v1h-1zM0 11h3v1h-3z"/><path id="g109" d="M0 2h3v1h-3zM2 3h1v6h-1zM0 9h5v1h-5z"/><path id="g110" d="M6 -1h1v3h-1zM2 0h1v3h-1zM9 1h1v1h-1zM6 2h4v1h-4zM3 3h4v1h-4zM9 3h1v3h-1zM0 4h3v1h-3zM6 4h1v4h-1zM2 5h1v4h-1zM8 6h2v1h-2zM10 8h1v2h-1zM3 9h1v1h-1zM3 10h7v1h-7z"/><path id="g111" d="M4 -1h1v1h-1zM5 0h1v1h-1zM9 0h1v2h-1zM6 1h1v1h-1zM4 2h1v4h-1zM8 2h1v1h-1zM2 3h1v1h-1zM7 3h1v2h-1zM9 3h1v2h-1zM1 4h1v3h-1zM6 5h1v1h-1zM10 5h1v2h-1zM4 6h2v1h-2zM4 7h1v1h-1zM11 7h1v1h-1zM2 8h3v1h-3zM8 8h1v2h-1zM0 9h2v1h-2zM4 9h1v1h-1zM4 10h5v1h-5z"/><path id="g112" d="M3 -1h1v1h-1zM5 -1h6v1h-6zM2 0h1v1h-1zM7 0h1v1h-1zM1 1h1v1h-1zM5 1h6v1h-6zM3 2h1v1h-1zM5 2h1v5h-1zM10 2h1v5h-1zM2 3h1v1h-1zM7 3h1v4h-1zM1 4h1v1h-1zM3 6h1v1h-1zM2 7h1v1h-1zM7 7h2v1h-2zM1 8h1v1h-1zM6 8h1v1h-1zM9 8h2v1h-2zM4 9h2v1h-2z"/><path id="g113" d="M3 -1h1v1h-1zM10 -1h1v1h-1zM1 0h5v1h-5zM7 0h3v1h-3zM1 1h1v1h-1zM3 1h1v1h-1zM7 1h1v1h-1zM1 2h5v1h-5zM7 2h4v1h-4zM3 3h1v1h-1zM6 3h1v1h-1zM9 3h1v3h-1zM1 4h6v1h-6zM3 5h1v1h-1zM6 5h1v1h-1zM2 6h8v1h-8zM2 7h1v1h-1zM9 7h1v1h-1zM2 8h8v1h-8zM2 9h1v1h-1zM9 9h1v1h-1zM2 10h8v1h-8z"/><path id="g114" d="M2 -1h1v2h-1zM6 -1h4v1h-4zM6 0h1v2h-1zM9 0h1v3h-1zM3 1h1v1h-1zM5 2h1v2h-1zM1 3h2v1h-2zM9 3h2v1h-2zM2 4h1v5h-1zM5 5h6v1h-6zM5 6h1v1h-1zM9 6h1v2h-1zM6 7h1v1h-1zM4 8h1v1h-1zM7 8h2v1h-2zM2 9h2v1h-2zM6 9h3v1h-3zM4 10h2v1h-2zM9 10h2v1h-2z"/><path id="g115" d="M1 -1h10v1h-10zM1 0h1v1h-1zM4 0h1v1h-1zM7 0h1v1h-1zM10 0h1v1h-1zM1 1h10v1h-10zM5 2h1v1h-1zM1 3h10v1h-10zM2 4h8v2h-8zM2 6h1v1h-1zM9 6h1v1h-1zM2 7h8v2h-8zM2 9h1v1h-1zM9 9h1v1h-1zM1 10h10v1h-10z"/><path id="g116" d="M1 7h3v1h-3zM1 8h1v1h-1zM3 8h1v1h-1zM1 9h3v1h-3z"/><path id="g117" d="M2 0h9v1h-9zM2 1h2v2h-2zM9 1h2v2h-2zM2 3h9v1h-9zM2 4h2v2h-2zM9 4h2v2h-2zM2 6h9v1h-9zM2 7h2v2h-2zM9 7h2v2h-2zM2 9h9v1h-9zM2 10h2v1h-2zM9 10h2v1h-2z"/><path id="g118" d="M2 -1h9v1h-9zM9 0h2v1h-2zM2 1h9v1h-9zM9 2h2v1h-2zM1 3h11v1h-11zM2 4h2v1h-2zM6 4h2v1h-2zM9 4h2v1h-2zM3 5h2v1h-2zM6 5h5v1h-5zM5 6h4v1h-4zM3 7h4v1h-4zM8 7h2v1h-2zM1 8h3v1h-3zM5 8h2v1h-2zM9 8h3v1h-3zM4 9h3v1h-3z"/><path id="g119" d="M2 -1h2v3h-2zM5 0h7v1h-7zM5 1h2v1h-2zM10 1h2v3h-2zM1 2h7v1h-7zM2 3h3v2h-3zM6 3h2v2h-2zM9 4h2v2h-2zM1 5h7v1h-7zM1 6h3v1h-3zM7 6h3v3h-3zM0 7h4v1h-4zM2 8h2v2h-2zM6 9h2v1h-2zM9 9h3v1h-3zM5 10h2v1h-2zM10 10h2v1h-2z"/><path id="g120" d="M1 -1h5v1h-5zM1 0h11v1h-11zM1 1h6v1h-6zM10 1h2v1h-2zM1 2h11v1h-11zM1 3h6v1h-6zM10 3h2v1h-2zM1 4h11v1h-11zM1 5h2v2h-2zM4 5h5v1h-5zM4 6h3v1h-3zM8 6h4v1h-4zM1 7h6v1h-6zM8 7h3v1h-3zM1 8h2v3h-2zM5 8h2v1h-2zM9 8h2v1h-2zM5 9h7v1h-7zM5 10h2v1h-2zM10 10h2v1h-2z"/><path id="g121" d="M2 -2h2v2h-2zM7 -2h2v1h-2zM6 -1h4v1h-4zM1 0h4v1h-4zM6 0h2v1h-2zM9 0h2v1h-2zM2 1h2v1h-2zM5 1h2v1h-2zM9 1h3v1h-3zM2 2h9v1h-9zM1 3h4v1h-4zM1 4h3v2h-3zM5 4h4v1h-4zM10 4h2v1h-2zM5 5h6v1h-6zM2 6h2v2h-2zM5 6h2v1h-2zM9 6h2v1h-2zM8 7h2v1h-2zM2 8h10v1h-10zM2 9h2v1h-2z"/><path id="g122" d="M1 -1h2v1h-2zM10 -1h2v2h-2zM2 0h7v1h-7zM3 1h2v1h-2zM7 1h5v1h-5zM3 2h9v1h-9zM0 3h12v1h-12zM2 4h10v1h-10zM3 5h9v1h-9zM2 6h10v2h-10zM1 8h2v2h-2zM5 8h2v1h-2zM10 8h2v2h-2zM4 9h4v1h-4zM1 10h4v1h-4zM7 10h5v1h-5z"/><path id="g123" d="M5 -1h1v3h-1zM2 0h1v1h-1zM3 1h1v1h-1zM1 2h10v1h-10zM5 3h1v1h-1zM10 3h1v5h-1zM4 4h1v3h-1zM6 5h1v1h-1zM7 6h1v1h-1zM3 7h1v2h-1zM9 8h1v2h-1zM2 9h1v1h-1zM1 10h1v1h-1zM7 10h3v1h-3z"/><path id="g124" d="M2 -1h1v2h-1zM5 0h5v1h-5zM1 1h5v1h-5zM9 1h1v1h-1zM2 2h1v1h-1zM5 2h5v1h-5zM2 3h2v2h-2zM5 3h1v1h-1zM9 3h1v1h-1zM5 4h5v1h-5zM1 5h2v2h-2zM5 5h1v5h-1zM7 5h1v2h-1zM10 6h1v1h-1zM0 7h1v1h-1zM2 7h1v4h-1zM8 7h2v1h-2zM9 8h1v1h-1zM7 9h1v1h-1zM9 9h2v1h-2zM5 10h2v1h-2zM10 10h1v1h-1z"/><path id="g125" d="M2 0h8v1h-8zM1 3h10v1h-10zM5 4h1v6h-1zM2 6h1v2h-1zM9 6h1v2h-1zM1 8h1v1h-1zM10 8h1v2h-1zM4 10h2v1h-2z"/><path id="g126" d="M2 0h1v2h-1zM5 0h1v4h-1zM9 0h1v2h-1zM3 2h1v1h-1zM8 2h1v1h-1zM2 4h8v1h-8zM9 5h1v1h-1zM2 6h8v1h-8zM9 7h1v2h-1zM1 9h9v1h-9z"/><path id="g127" d="M1 0h11v1h-11zM9 1h2v9h-2zM2 3h6v1h-6zM2 4h2v3h-2zM6 4h2v3h-2zM2 7h6v1h-6zM2 8h2v1h-2zM7 10h4v1h-4z"/><path id="g128" d="M1 0h11v1h-11zM1 1h4v1h-4zM10 1h2v1h-2zM3 2h8v1h-8zM3 3h2v2h-2zM3 5h8v1h-8zM9 6h2v1h-2zM1 7h10v1h-10zM9 8h2v1h-2zM8 9h2v1h-2zM6 10h4v1h-4z"/><path id="g129" d="M0 5h2v1h-2zM3 5h2v1h-2zM1 6h1v3h-1zM4 6h1v3h-1zM2 9h4v1h-4z"/><path id="g130" d="M3 -1h1v2h-1zM2 1h8v1h-8zM1 2h2v1h-2zM9 2h1v5h-1zM1 3h6v1h-6zM2 4h1v2h-1zM6 4h1v2h-1zM2 6h5v1h-5zM2 7h1v3h-1zM8 7h2v1h-2zM10 9h1v1h-1zM3 10h8v1h-8z"/><path id="g131" d="M6 -1h1v1h-1zM5 0h2v1h-2zM4 1h1v1h-1zM7 1h1v1h-1zM2 2h2v1h-2zM5 2h1v1h-1zM8 2h2v1h-2zM1 3h1v1h-1zM6 3h1v1h-1zM10 3h1v1h-1zM2 4h7v1h-7zM7 5h1v1h-1zM2 6h8v1h-8zM2 7h1v2h-1zM9 7h1v2h-1zM2 9h8v1h-8zM2 10h1v1h-1zM9 10h1v1h-1z"/><path id="g132" d="M10 -1h1v1h-1zM1 0h4v1h-4zM6 0h4v1h-4zM1 1h1v1h-1zM6 1h1v2h-1zM1 2h4v1h-4zM1 3h1v2h-1zM4 3h1v2h-1zM6 3h5v1h-5zM6 4h1v5h-1zM9 4h1v7h-1zM1 5h4v1h-4zM1 6h1v4h-1zM5 9h1v2h-1zM0 10h1v1h-1z"/><path id="g133" d="M5 -1h1v1h-1zM4 0h1v1h-1zM1 1h10v1h-10zM3 2h1v1h-1zM3 3h7v1h-7zM2 4h2v1h-2zM9 4h1v1h-1zM1 5h1v1h-1zM3 5h7v1h-7zM3 6h1v1h-1zM9 6h1v1h-1zM3 7h7v1h-7zM3 8h1v3h-1zM9 8h1v2h-1zM7 10h3v1h-3z"/><path id="g134" d="M3 0h1v12h-1z"/><path id="g135" d="M3 2h3v1h-3zM2 3h1v2h-1zM1 5h4v1h-4zM2 6h1v3h-1zM1 9h4v1h-4z"/><path id="g136" d="M0 2h2v1h-2zM1 3h1v4h-1zM3 5h3v1h-3zM3 6h1v1h-1zM1 7h2v1h-2zM1 8h1v1h-1zM3 8h2v1h-2zM0 9h3v1h-3zM4 9h2v1h-2z"/><path id="g137" d="M0 11h6v1h-6z"/><path id="g138" d="M0 2h2v1h-2zM1 3h1v2h-1zM1 5h3v1h-3zM1 6h1v3h-1zM4 6h1v3h-1zM0 9h3v1h-3zM4 9h2v1h-2z"/><path id="g139" d="M0 5h2v1h-2zM3 5h2v1h-2zM1 6h2v1h-2zM1 7h1v2h-1zM0 9h3v1h-3z"/><path id="g140" d="M0 5h3v1h-3zM4 5h2v1h-2zM1 6h1v2h-1zM4 6h1v1h-1zM3 7h1v1h-1zM2 8h2v1h-2zM2 9h1v2h-1zM0 11h2v1h-2z"/><path id="g141" d="M9 -2h1v3h-1zM1 -1h4v1h-4zM4 0h1v4h-1zM6 1h5v1h-5zM9 2h1v7h-1zM2 3h1v1h-1zM3 4h2v1h-2zM6 4h1v1h-1zM3 5h1v1h-1zM7 5h1v2h-1zM3 6h2v1h-2zM2 7h1v2h-1zM5 7h1v1h-1zM1 9h1v1h-1zM7 9h3v1h-3z"/><path id="g142" d="M1 0h9v1h-9zM6 1h1v3h-1zM1 4h10v1h-10zM6 5h1v5h-1zM3 10h3v1h-3z"/><path id="g143" d="M1 0h9v1h-9zM9 1h1v3h-1zM2 2h1v2h-1zM2 4h8v1h-8zM2 5h1v5h-1zM9 5h1v1h-1zM10 8h1v2h-1zM2 10h8v1h-8z"/><path id="g144" d="M4 0h1v1h-1zM1 1h10v1h-10zM3 2h1v2h-1zM5 3h6v1h-6zM2 4h1v1h-1zM9 4h1v1h-1zM1 5h2v1h-2zM7 5h2v1h-2zM2 6h1v5h-1zM4 6h7v1h-7zM7 7h1v3h-1zM5 10h3v1h-3z"/><path id="g145" d="M5 -1h1v1h-1zM4 0h1v1h-1zM1 1h10v1h-10zM3 2h1v2h-1zM7 3h1v2h-1zM2 4h1v1h-1zM1 5h2v2h-2zM4 5h7v1h-7zM7 6h1v4h-1zM2 7h1v4h-1zM4 10h7v1h-7z"/><path id="g146" d="M3 -1h1v1h-1zM7 -1h1v3h-1zM2 0h1v1h-1zM2 1h4v1h-4zM2 2h1v2h-1zM5 2h1v3h-1zM7 2h2v2h-2zM1 4h2v2h-2zM7 4h1v5h-1zM9 4h1v1h-1zM4 5h1v1h-1zM10 5h1v1h-1zM3 6h2v1h-2zM3 7h1v1h-1zM3 8h2v1h-2zM2 9h1v1h-1zM5 9h2v1h-2zM1 10h1v1h-1zM7 10h4v1h-4z"/><path id="g147" d="M1 -1h1v1h-1zM7 -1h1v2h-1zM2 0h2v1h-2zM5 1h6v1h-6zM7 2h1v3h-1zM1 3h1v1h-1zM2 4h1v1h-1zM4 5h7v1h-7zM6 6h1v2h-1zM2 7h1v2h-1zM5 8h1v1h-1zM9 8h1v1h-1zM1 9h1v2h-1zM5 9h6v1h-6zM10 10h1v1h-1z"/><path id="g148" d="M1 -1h10v1h-10zM4 0h1v1h-1zM7 0h1v1h-1zM1 1h10v2h-10zM5 3h1v1h-1zM2 4h1v1h-1zM4 4h1v1h-1zM6 4h4v1h-4zM1 5h1v1h-1zM3 5h7v1h-7zM2 6h1v1h-1zM5 6h5v1h-5zM1 7h2v1h-2zM6 7h3v1h-3zM2 8h1v3h-1zM5 8h5v1h-5zM4 9h1v1h-1zM6 9h1v1h-1zM8 9h1v1h-1zM4 10h7v1h-7z"/><path id="g149" d="M3 -1h1v1h-1zM8 -1h1v2h-1zM4 0h1v1h-1zM1 1h10v1h-10zM5 2h1v1h-1zM2 3h8v1h-8zM1 4h10v1h-10zM2 6h8v1h-8zM2 7h1v3h-1zM4 7h1v3h-1zM7 7h1v3h-1zM9 7h1v3h-1zM1 10h10v1h-10z"/><path id="g150" d="M4 -1h1v1h-1zM1 0h3v1h-3zM6 0h5v1h-5zM1 1h1v2h-1zM7 1h1v2h-1zM10 1h1v3h-1zM4 2h1v1h-1zM1 3h6v1h-6zM1 4h1v1h-1zM5 4h2v1h-2zM8 4h2v1h-2zM2 5h8v1h-8zM2 6h1v1h-1zM5 6h1v1h-1zM9 6h1v1h-1zM2 7h8v1h-8zM2 8h1v2h-1zM5 8h1v2h-1zM9 8h1v2h-1zM2 10h8v1h-8z"/><path id="g151" d="M1 -1h6v2h-6zM10 -1h1v10h-1zM8 0h1v7h-1zM1 1h1v2h-1zM6 1h1v2h-1zM1 3h6v2h-6zM1 5h1v1h-1zM3 5h1v1h-1zM6 5h1v1h-1zM1 6h6v1h-6zM1 7h1v1h-1zM3 7h1v1h-1zM6 7h1v1h-1zM1 8h6v1h-6zM1 9h1v1h-1zM6 9h1v1h-1zM8 9h3v1h-3z"/><path id="g152" d="M5 0h1v2h-1zM1 2h10v1h-10zM4 3h2v2h-2zM7 3h1v2h-1zM3 5h1v2h-1zM5 5h1v3h-1zM8 5h1v2h-1zM2 7h1v1h-1zM9 7h1v1h-1zM1 8h1v1h-1zM3 8h6v1h-6zM10 8h2v1h-2zM5 9h1v2h-1z"/><path id="g153" d="M1 -1h1v11h-1zM4 -1h7v1h-7zM4 0h1v3h-1zM10 0h1v3h-1zM4 3h7v1h-7zM4 4h1v4h-1zM10 4h1v4h-1zM4 8h7v1h-7zM4 9h1v1h-1zM10 9h1v1h-1z"/><path id="g154" d="M5 -2h1v1h-1zM1 -1h10v1h-10zM1 0h1v2h-1zM10 0h1v2h-1zM2 2h8v1h-8zM5 3h1v2h-1zM3 4h1v1h-1zM2 5h1v2h-1zM6 5h4v1h-4zM5 6h1v2h-1zM2 7h2v1h-2zM1 8h1v1h-1zM4 8h2v1h-2zM0 9h2v1h-2zM6 9h5v1h-5z"/><path id="g155" d="M8 -1h2v1h-2zM2 0h6v1h-6zM1 1h10v1h-10zM5 2h1v1h-1zM2 3h8v2h-8zM2 5h1v1h-1zM5 5h1v1h-1zM9 5h1v1h-1zM2 6h8v1h-8zM5 7h1v1h-1zM2 8h9v1h-9zM5 9h1v1h-1zM1 10h10v1h-10z"/><path id="g156" d="M9 -1h2v1h-2zM1 0h1v1h-1zM5 0h4v1h-4zM2 1h1v1h-1zM4 1h1v1h-1zM5 2h6v1h-6zM4 3h1v5h-1zM9 3h1v2h-1zM1 4h2v1h-2zM6 4h1v1h-1zM2 5h1v4h-1zM7 5h2v1h-2zM8 6h1v1h-1zM7 7h1v1h-1zM9 7h1v1h-1zM5 8h2v1h-2zM10 8h1v1h-1zM1 9h1v1h-1zM3 9h1v1h-1zM4 10h7v1h-7z"/><path id="g157" d="M1 0h10v1h-10zM1 1h1v8h-1zM10 1h1v8h-1zM4 2h4v1h-4zM3 3h1v3h-1zM7 3h1v3h-1zM4 6h4v1h-4zM1 9h10v1h-10zM1 10h1v1h-1zM10 10h1v1h-1z"/></defs>
<g fill="#000"><use href="#g0" x="23" y="11"/><use href="#g1" x="36" y="11"/><use href="#g2" x="49" y="11"/><use href="#g3" x="62" y="11"/><use href="#g0" x="14" y="44"/><use href="#g1" x="27" y="44"/><use href="#g2" x="40" y="44"/><use href="#g3" x="53" y="44"/><use href="#g11" x="17" y="74"/><use href="#g12" x="29" y="74"/><use href="#g13" x="41" y="74"/><use href="#g14" x="53" y="74"/><use href="#g15" x="65" y="74"/><use href="#g16" x="168" y="74"/><use href="#g17" x="180" y="74"/><use href="#g18" x="192" y="74"/><use href="#g19" x="204" y="74"/><use href="#g20" x="17" y="102"/><use href="#g21" x="29" y="102"/><use href="#g15" x="41" y="102"/><use href="#g22" x="168" y="102"/><use href="#g23" x="174" y="102"/><use href="#g24" x="180" y="102"/><use href="#g25" x="186" y="102"/><use href="#g26" x="192" y="102"/><use href="#g24" x="198" y="102"/><use href="#g27" x="17" y="130"/><use href="#g28" x="29" y="130"/><use href="#g29" x="41" y="130"/><use href="#g30" x="53" y="130"/><use href="#g15" x="65" y="130"/><use href="#g31" x="168" y="130"/><use href="#g24" x="174" y="130"/><use href="#g32" x="180" y="130"/><use href="#g31" x="186" y="130"/><use href="#g33" x="192" y="130"/><use href="#g34" x="204" y="130"/><use href="#g23" x="210" y="130"/><use href="#g35" x="17" y="158"/><use href="#g36" x="29" y="158"/><use href="#g13" x="41" y="158"/><use href="#g14" x="53" y="158"/><use href="#g15" x="65" y="158"/><use href="#g37" x="168" y="158"/><use href="#g38" x="180" y="158"/><use href="#g39" x="192" y="158"/><use href="#g40" x="204" y="158"/><use href="#g41" x="17" y="186"/><use href="#g42" x="29" y="186"/><use href="#g43" x="41" y="186"/><use href="#g44" x="53" y="186"/><use href="#g15" x="65" y="186"/><use href="#g24" x="168" y="186"/><use href="#g33" x="174" y="186"/><use href="#g33" x="180" y="186"/><use href="#g45" x="186" y="186"/><use href="#g46" x="192" y="186"/><use href="#g33" x="198" y="186"/><use href="#g47" x="204" y="186"/><use href="#g46" x="210" y="186"/><use href="#g33" x="216" y="186"/><use href="#g26" x="222" y="186"/><use href="#g48" x="17" y="214"/><use href="#g49" x="29" y="214"/><use href="#g50" x="41" y="214"/><use href="#g51" x="53" y="214"/><use href="#g15" x="65" y="214"/><use href="#g52" x="168" y="214"/><use href="#g53" x="174" y="214"/><use href="#g54" x="180" y="214"/><use href="#g55" x="186" y="214"/><use href="#g56" x="192" y="214"/><use href="#g57" x="198" y="214"/><use href="#g53" x="204" y="214"/><use href="#g58" x="210" y="214"/><use href="#g53" x="216" y="214"/><use href="#g58" x="222" y="214"/><use href="#g59" x="228" y="214"/><use href="#g54" x="234" y="214"/><use href="#g60" x="240" y="214"/><use href="#g32" x="246" y="214"/><use href="#g59" x="252" y="214"/><use href="#g61" x="258" y="214"/><use href="#g54" x="264" y="214"/><use href="#g39" x="17" y="242"/><use href="#g40" x="29" y="242"/><use href="#g62" x="41" y="242"/><use href="#g63" x="53" y="242"/><use href="#g15" x="65" y="242"/><use href="#g64" x="168" y="242"/><use href="#g64" x="174" y="242"/><use href="#g64" x="180" y="242"/><use href="#g32" x="186" y="242"/><use href="#g53" x="192" y="242"/><use href="#g58" x="198" y="242"/><use href="#g53" x="204" y="242"/><use href="#g58" x="210" y="242"/><use href="#g59" x="216" y="242"/><use href="#g54" x="222" y="242"/><use href="#g60" x="228" y="242"/><use href="#g32" x="234" y="242"/><use href="#g59" x="240" y="242"/><use href="#g61" x="246" y="242"/><use href="#g54" x="252" y="242"/><use href="#g65" x="17" y="270"/><use href="#g66" x="29" y="270"/><use href="#g67" x="41" y="270"/><use href="#g68" x="53" y="270"/><use href="#g15" x="65" y="270"/><use href="#g69" x="168" y="270"/><use href="#g70" x="180" y="270"/><use href="#g71" x="192" y="270"/><use href="#g72" x="204" y="270"/><use href="#g32" x="216" y="270"/><use href="#g32" x="222" y="270"/><use href="#g32" x="228" y="270"/><use href="#g73" x="17" y="294"/><use href="#g74" x="30" y="294"/><use href="#g75" x="43" y="294"/><use href="#g76" x="56" y="294"/><use href="#g6" x="69" y="294"/><use href="#g77" x="88" y="294"/><use href="#g78" x="100" y="294"/><use href="#g43" x="112" y="294"/><use href="#g79" x="124" y="294"/><use href="#g80" x="136" y="294"/><use href="#g81" x="148" y="294"/><use href="#g27" x="160" y="294"/><use href="#g28" x="172" y="294"/><use href="#g82" x="184" y="294"/><use href="#g83" x="196" y="294"/><use href="#g84" x="208" y="294"/><use href="#g85" x="220" y="294"/><use href="#g86" x="232" y="294"/><use href="#g87" x="244" y="294"/><use href="#g88" x="256" y="294"/><use href="#g89" x="268" y="294"/><use href="#g90" x="280" y="294"/><use href="#g91" x="292" y="294"/><use href="#g92" x="304" y="294"/><use href="#g93" x="316" y="294"/><use href="#g94" x="328" y="294"/><use href="#g95" x="340" y="294"/><use href="#g96" x="352" y="294"/><use href="#g97" x="364" y="294"/><use href="#g98" x="376" y="294"/><use href="#g99" x="388" y="294"/><use href="#g100" x="400" y="294"/><use href="#g101" x="412" y="294"/><use href="#g102" x="424" y="294"/><use href="#g103" x="436" y="294"/><use href="#g88" x="448" y="294"/><use href="#g89" x="460" y="294"/><use href="#g104" x="472" y="294"/><use href="#g105" x="484" y="294"/><use href="#g99" x="496" y="294"/><use href="#g100" x="508" y="294"/><use href="#g101" x="520" y="294"/><use href="#g102" x="532" y="294"/><use href="#g103" x="544" y="294"/><use href="#g88" x="556" y="294"/><use href="#g89" x="568" y="294"/><use href="#g106" x="580" y="294"/><use href="#g107" x="586" y="294"/><use href="#g58" x="592" y="294"/><use href="#g54" x="598" y="294"/><use href="#g108" x="604" y="294"/><use href="#g109" x="610" y="294"/><use href="#g58" x="616" y="294"/><use href="#g107" x="622" y="294"/><use href="#g60" x="628" y="294"/><use href="#g104" x="634" y="294"/><use href="#g88" x="646" y="294"/><use href="#g89" x="658" y="294"/><use href="#g110" x="670" y="294"/><use href="#g111" x="682" y="294"/><use href="#g112" x="694" y="294"/><use href="#g113" x="706" y="294"/><use href="#g43" x="718" y="294"/><use href="#g114" x="730" y="294"/><use href="#g115" x="742" y="294"/><use href="#g91" x="754" y="294"/><use href="#g92" x="17" y="312"/><use href="#g93" x="29" y="312"/><use href="#g94" x="41" y="312"/><use href="#g95" x="53" y="312"/><use href="#g116" x="65" y="312"/><use href="#g117" x="17" y="359"/><use href="#g118" x="30" y="359"/><use href="#g119" x="43" y="359"/><use href="#g120" x="56" y="359"/><use href="#g121" x="69" y="359"/><use href="#g122" x="82" y="359"/><use href="#g6" x="95" y="359"/><use href="#g32" x="17" y="377"/><use href="#g32" x="23" y="377"/><use href="#g106" x="29" y="377"/><use href="#g123" x="41" y="377"/><use href="#g124" x="53" y="377"/><use href="#g88" x="65" y="377"/><use href="#g89" x="77" y="377"/><use href="#g32" x="17" y="395"/><use href="#g106" x="23" y="395"/><use href="#g83" x="35" y="395"/><use href="#g125" x="47" y="395"/><use href="#g126" x="59" y="395"/><use href="#g90" x="71" y="395"/><use href="#g88" x="83" y="395"/><use href="#g89" x="95" y="395"/><use href="#g117" x="292" y="338"/><use href="#g118" x="305" y="338"/><use href="#g127" x="466" y="338"/><use href="#g128" x="479" y="338"/><use href="#g32" x="170" y="359"/><use href="#g32" x="176" y="359"/><use href="#g106" x="182" y="359"/><use href="#g108" x="188" y="359"/><use href="#g109" x="194" y="359"/><use href="#g129" x="200" y="359"/><use href="#g60" x="206" y="359"/><use href="#g106" x="212" y="359"/><use href="#g32" x="170" y="380"/><use href="#g32" x="176" y="380"/><use href="#g106" x="182" y="380"/><use href="#g53" x="188" y="380"/><use href="#g58" x="194" y="380"/><use href="#g53" x="200" y="380"/><use href="#g58" x="206" y="380"/><use href="#g106" x="212" y="380"/><use href="#g32" x="170" y="401"/><use href="#g32" x="176" y="401"/><use href="#g106" x="182" y="401"/><use href="#g53" x="188" y="401"/><use href="#g58" x="194" y="401"/><use href="#g53" x="200" y="401"/><use href="#g58" x="206" y="401"/><use href="#g106" x="212" y="401"/><use href="#g107" x="218" y="401"/><use href="#g58" x="224" y="401"/><use href="#g54" x="230" y="401"/><use href="#g108" x="236" y="401"/><use href="#g109" x="242" y="401"/><use href="#g58" x="248" y="401"/><use href="#g107" x="254" y="401"/><use href="#g60" x="260" y="401"/><use href="#g106" x="266" y="401"/><use href="#g32" x="170" y="422"/><use href="#g32" x="176" y="422"/><use href="#g106" x="182" y="422"/><use href="#g55" x="188" y="422"/><use href="#g56" x="194" y="422"/><use href="#g59" x="200" y="422"/><use href="#g109" x="206" y="422"/><use href="#g129" x="212" y="422"/><use href="#g53" x="218" y="422"/><use href="#g58" x="224" y="422"/><use href="#g106" x="230" y="422"/><use href="#g107" x="236" y="422"/><use href="#g52" x="242" y="422"/><use href="#g22" x="248" y="422"/><use href="#g109" x="254" y="422"/><use href="#g55" x="260" y="422"/><use href="#g23" x="266" y="422"/><use href="#g106" x="272" y="422"/><use href="#g11" x="17" y="448"/><use href="#g12" x="29" y="448"/><use href="#g130" x="41" y="448"/><use href="#g131" x="53" y="448"/><use href="#g87" x="65" y="448"/><use href="#g132" x="77" y="448"/><use href="#g133" x="89" y="448"/><use href="#g27" x="101" y="448"/><use href="#g28" x="113" y="448"/><use href="#g82" x="125" y="448"/><use href="#g83" x="137" y="448"/><use href="#g15" x="149" y="448"/><use href="#g27" x="20" y="473"/><use href="#g28" x="32" y="473"/><use href="#g134" x="44" y="473"/><use href="#g32" x="50" y="473"/><use href="#g32" x="56" y="473"/><use href="#g106" x="62" y="473"/><use href="#g108" x="68" y="473"/><use href="#g109" x="74" y="473"/><use href="#g129" x="80" y="473"/><use href="#g60" x="86" y="473"/><use href="#g106" x="92" y="473"/><use href="#g135" x="98" y="473"/><use href="#g109" x="104" y="473"/><use href="#g55" x="110" y="473"/><use href="#g56" x="116" y="473"/><use href="#g136" x="122" y="473"/><use href="#g137" x="128" y="473"/><use href="#g52" x="134" y="473"/><use href="#g53" x="140" y="473"/><use href="#g53" x="146" y="473"/><use href="#g32" x="152" y="473"/><use href="#g108" x="158" y="473"/><use href="#g138" x="164" y="473"/><use href="#g108" x="170" y="473"/><use href="#g27" x="20" y="491"/><use href="#g28" x="32" y="491"/><use href="#g134" x="44" y="491"/><use href="#g32" x="50" y="491"/><use href="#g32" x="56" y="491"/><use href="#g106" x="62" y="491"/><use href="#g53" x="68" y="491"/><use href="#g58" x="74" y="491"/><use href="#g53" x="80" y="491"/><use href="#g58" x="86" y="491"/><use href="#g106" x="92" y="491"/><use href="#g135" x="98" y="491"/><use href="#g139" x="104" y="491"/><use href="#g55" x="110" y="491"/><use href="#g58" x="116" y="491"/><use href="#g56" x="122" y="491"/><use href="#g53" x="128" y="491"/><use href="#g109" x="134" y="491"/><use href="#g55" x="140" y="491"/><use href="#g56" x="146" y="491"/><use href="#g136" x="152" y="491"/><use href="#g137" x="158" y="491"/><use href="#g52" x="164" y="491"/><use href="#g53" x="170" y="491"/><use href="#g53" x="176" y="491"/><use href="#g32" x="182" y="491"/><use href="#g108" x="188" y="491"/><use href="#g138" x="194" y="491"/><use href="#g108" x="200" y="491"/><use href="#g27" x="20" y="509"/><use href="#g28" x="32" y="509"/><use href="#g134" x="44" y="509"/><use href="#g32" x="50" y="509"/><use href="#g32" x="56" y="509"/><use href="#g106" x="62" y="509"/><use href="#g53" x="68" y="509"/><use href="#g58" x="74" y="509"/><use href="#g53" x="80" y="509"/><use href="#g58" x="86" y="509"/><use href="#g106" x="92" y="509"/><use href="#g135" x="98" y="509"/><use href="#g139" x="104" y="509"/><use href="#g55" x="110" y="509"/><use href="#g58" x="116" y="509"/><use href="#g56" x="122" y="509"/><use href="#g53" x="128" y="509"/><use href="#g109" x="134" y="509"/><use href="#g55" x="140" y="509"/><use href="#g56" x="146" y="509"/><use href="#g136" x="152" y="509"/><use href="#g137" x="158" y="509"/><use href="#g58" x="164" y="509"/><use href="#g53" x="170" y="509"/><use href="#g55" x="176" y="509"/><use href="#g107" x="182" y="509"/><use href="#g32" x="188" y="509"/><use href="#g108" x="194" y="509"/><use href="#g138" x="200" y="509"/><use href="#g108" x="206" y="509"/><use href="#g27" x="20" y="527"/><use href="#g28" x="32" y="527"/><use href="#g134" x="44" y="527"/><use href="#g32" x="50" y="527"/><use href="#g32" x="56" y="527"/><use href="#g106" x="62" y="527"/><use href="#g53" x="68" y="527"/><use href="#g58" x="74" y="527"/><use href="#g53" x="80" y="527"/><use href="#g58" x="86" y="527"/><use href="#g106" x="92" y="527"/><use href="#g135" x="98" y="527"/><use href="#g139" x="104" y="527"/><use href="#g55" x="110" y="527"/><use href="#g58" x="116" y="527"/><use href="#g56" x="122" y="527"/><use href="#g53" x="128" y="527"/><use href="#g109" x="134" y="527"/><use href="#g55" x="140" y="527"/><use href="#g56" x="146" y="527"/><use href="#g136" x="152" y="527"/><use href="#g137" x="158" y="527"/><use href="#g54" x="164" y="527"/><use href="#g52" x="170" y="527"/><use href="#g55" x="176" y="527"/><use href="#g56" x="182" y="527"/><use href="#g32" x="188" y="527"/><use href="#g108" x="194" y="527"/><use href="#g138" x="200" y="527"/><use href="#g108" x="206" y="527"/><use href="#g27" x="20" y="545"/><use href="#g28" x="32" y="545"/><use href="#g134" x="44" y="545"/><use href="#g32" x="50" y="545"/><use href="#g32" x="56" y="545"/><use href="#g106" x="62" y="545"/><use href="#g53" x="68" y="545"/><use href="#g58" x="74" y="545"/><use href="#g53" x="80" y="545"/><use href="#g58" x="86" y="545"/><use href="#g106" x="92" y="545"/><use href="#g135" x="98" y="545"/><use href="#g139" x="104" y="545"/><use href="#g55" x="110" y="545"/><use href="#g58" x="116" y="545"/><use href="#g56" x="122" y="545"/><use href="#g53" x="128" y="545"/><use href="#g109" x="134" y="545"/><use href="#g55" x="140" y="545"/><use href="#g56" x="146" y="545"/><use href="#g136" x="152" y="545"/><use href="#g137" x="158" y="545"/><use href="#g107" x="164" y="545"/><use href="#g140" x="170" y="545"/><use href="#g108" x="176" y="545"/><use href="#g58" x="182" y="545"/><use href="#g32" x="188" y="545"/><use href="#g108" x="194" y="545"/><use href="#g138" x="200" y="545"/><use href="#g108" x="206" y="545"/><use href="#g27" x="20" y="563"/><use href="#g28" x="32" y="563"/><use href="#g134" x="44" y="563"/><use href="#g32" x="50" y="563"/><use href="#g32" x="56" y="563"/><use href="#g106" x="62" y="563"/><use href="#g53" x="68" y="563"/><use href="#g58" x="74" y="563"/><use href="#g53" x="80" y="563"/><use href="#g58" x="86" y="563"/><use href="#g106" x="92" y="563"/><use href="#g107" x="98" y="563"/><use href="#g58" x="104" y="563"/><use href="#g54" x="110" y="563"/><use href="#g108" x="116" y="563"/><use href="#g109" x="122" y="563"/><use href="#g58" x="128" y="563"/><use href="#g107" x="134" y="563"/><use href="#g60" x="140" y="563"/><use href="#g106" x="146" y="563"/><use href="#g135" x="152" y="563"/><use href="#g139" x="158" y="563"/><use href="#g55" x="164" y="563"/><use href="#g58" x="170" y="563"/><use href="#g56" x="176" y="563"/><use href="#g53" x="182" y="563"/><use href="#g109" x="188" y="563"/><use href="#g55" x="194" y="563"/><use href="#g56" x="200" y="563"/><use href="#g136" x="206" y="563"/><use href="#g137" x="212" y="563"/><use href="#g52" x="218" y="563"/><use href="#g53" x="224" y="563"/><use href="#g53" x="230" y="563"/><use href="#g32" x="236" y="563"/><use href="#g138" x="242" y="563"/><use href="#g107" x="248" y="563"/><use href="#g54" x="254" y="563"/><use href="#g27" x="20" y="581"/><use href="#g28" x="32" y="581"/><use href="#g134" x="44" y="581"/><use href="#g32" x="50" y="581"/><use href="#g32" x="56" y="581"/><use href="#g106" x="62" y="581"/><use href="#g53" x="68" y="581"/><use href="#g58" x="74" y="581"/><use href="#g53" x="80" y="581"/><use href="#g58" x="86" y="581"/><use href="#g106" x="92" y="581"/><use href="#g107" x="98" y="581"/><use href="#g58" x="104" y="581"/><use href="#g54" x="110" y="581"/><use href="#g108" x="116" y="581"/><use href="#g109" x="122" y="581"/><use href="#g58" x="128" y="581"/><use href="#g107" x="134" y="581"/><use href="#g60" x="140" y="581"/><use href="#g106" x="146" y="581"/><use href="#g135" x="152" y="581"/><use href="#g139" x="158" y="581"/><use href="#g55" x="164" y="581"/><use href="#g58" x="170" y="581"/><use href="#g56" x="176" y="581"/><use href="#g53" x="182" y="581"/><use href="#g109" x="188" y="581"/><use href="#g55" x="194" y="581"/><use href="#g56" x="200" y="581"/><use href="#g136" x="206" y="581"/><use href="#g137" x="212" y="581"/><use href="#g58" x="218" y="581"/><use href="#g53" x="224" y="581"/><use href="#g55" x="230" y="581"/><use href="#g107" x="236" y="581"/><use href="#g32" x="242" y="581"/><use href="#g138" x="248" y="581"/><use href="#g107" x="254" y="581"/><use href="#g54" x="260" y="581"/><use href="#g27" x="20" y="599"/><use href="#g28" x="32" y="599"/><use href="#g134" x="44" y="599"/><use href="#g32" x="50" y="599"/><use href="#g32" x="56" y="599"/><use href="#g106" x="62" y="599"/><use href="#g53" x="68" y="599"/><use href="#g58" x="74" y="599"/><use href="#g53" x="80" y="599"/><use href="#g58" x="86" y="599"/><use href="#g106" x="92" y="599"/><use href="#g107" x="98" y="599"/><use href="#g58" x="104" y="599"/><use href="#g54" x="110" y="599"/><use href="#g108" x="116" y="599"/><use href="#g109" x="122" y="599"/><use href="#g58" x="128" y="599"/><use href="#g107" x="134" y="599"/><use href="#g60" x="140" y="599"/><use href="#g106" x="146" y="599"/><use href="#g135" x="152" y="599"/><use href="#g139" x="158" y="599"/><use href="#g55" x="164" y="599"/><use href="#g58" x="170" y="599"/><use href="#g56" x="176" y="599"/><use href="#g53" x="182" y="599"/><use href="#g109" x="188" y="599"/><use href="#g55" x="194" y="599"/><use href="#g56" x="200" y="599"/><use href="#g136" x="206" y="599"/><use href="#g137" x="212" y="599"/><use href="#g54" x="218" y="599"/><use href="#g52" x="224" y="599"/><use href="#g55" x="230" y="599"/><use href="#g56" x="236" y="599"/><use href="#g32" x="242" y="599"/><use href="#g138" x="248" y="599"/><use href="#g107" x="254" y="599"/><use href="#g54" x="260" y="599"/><use href="#g27" x="20" y="617"/><use href="#g28" x="32" y="617"/><use href="#g134" x="44" y="617"/><use href="#g32" x="50" y="617"/><use href="#g32" x="56" y="617"/><use href="#g106" x="62" y="617"/><use href="#g53" x="68" y="617"/><use href="#g58" x="74" y="617"/><use href="#g53" x="80" y="617"/><use href="#g58" x="86" y="617"/><use href="#g106" x="92" y="617"/><use href="#g107" x="98" y="617"/><use href="#g58" x="104" y="617"/><use href="#g54" x="110" y="617"/><use href="#g108" x="116" y="617"/><use href="#g109" x="122" y="617"/><use href="#g58" x="128" y="617"/><use href="#g107" x="134" y="617"/><use href="#g60" x="140" y="617"/><use href="#g106" x="146" y="617"/><use href="#g135" x="152" y="617"/><use href="#g139" x="158" y="617"/><use href="#g55" x="164" y="617"/><use href="#g58" x="170" y="617"/><use href="#g56" x="176" y="617"/><use href="#g53" x="182" y="617"/><use href="#g109" x="188" y="617"/><use href="#g55" x="194" y="617"/><use href="#g56" x="200" y="617"/><use href="#g136" x="206" y="617"/><use href="#g137" x="212" y="617"/><use href="#g107" x="218" y="617"/><use href="#g140" x="224" y="617"/><use href="#g108" x="230" y="617"/><use href="#g58" x="236" y="617"/><use href="#g32" x="242" y="617"/><use href="#g138" x="248" y="617"/><use href="#g107" x="254" y="617"/><use href="#g54" x="260" y="617"/><use href="#g27" x="20" y="635"/><use href="#g28" x="32" y="635"/><use href="#g134" x="44" y="635"/><use href="#g32" x="50" y="635"/><use href="#g32" x="56" y="635"/><use href="#g106" x="62" y="635"/><use href="#g55" x="68" y="635"/><use href="#g56" x="74" y="635"/><use href="#g59" x="80" y="635"/><use href="#g109" x="86" y="635"/><use href="#g129" x="92" y="635"/><use href="#g53" x="98" y="635"/><use href="#g58" x="104" y="635"/><use href="#g106" x="110" y="635"/><use href="#g107" x="116" y="635"/><use href="#g52" x="122" y="635"/><use href="#g22" x="128" y="635"/><use href="#g109" x="134" y="635"/><use href="#g55" x="140" y="635"/><use href="#g23" x="146" y="635"/><use href="#g106" x="152" y="635"/><use href="#g135" x="158" y="635"/><use href="#g109" x="164" y="635"/><use href="#g55" x="170" y="635"/><use href="#g56" x="176" y="635"/><use href="#g136" x="182" y="635"/><use href="#g32" x="188" y="635"/><use href="#g109" x="194" y="635"/><use href="#g55" x="200" y="635"/><use href="#g23" x="206" y="635"/><use href="#g32" x="212" y="635"/><use href="#g108" x="218" y="635"/><use href="#g138" x="224" y="635"/><use href="#g108" x="230" y="635"/><use href="#g141" x="17" y="679"/><use href="#g142" x="29" y="679"/><use href="#g143" x="41" y="679"/><use href="#g144" x="53" y="679"/><use href="#g145" x="65" y="679"/><use href="#g27" x="77" y="679"/><use href="#g28" x="89" y="679"/><use href="#g146" x="101" y="679"/><use href="#g103" x="113" y="679"/><use href="#g40" x="125" y="679"/><use href="#g147" x="137" y="679"/><use href="#g15" x="149" y="679"/><use href="#g148" x="194" y="680"/><use href="#g149" x="206" y="680"/><use href="#g148" x="251" y="680"/><use href="#g149" x="263" y="680"/><use href="#g96" x="275" y="680"/><use href="#g81" x="287" y="680"/><use href="#g150" x="299" y="680"/><use href="#g151" x="311" y="680"/><use href="#g152" x="323" y="680"/><use href="#g81" x="369" y="680"/><use href="#g150" x="381" y="680"/><use href="#g153" x="393" y="680"/><use href="#g27" x="405" y="680"/><use href="#g28" x="417" y="680"/><use href="#g80" x="40" y="715"/><use href="#g154" x="52" y="715"/><use href="#g155" x="129" y="715"/><use href="#g115" x="141" y="715"/><use href="#g156" x="220" y="715"/><use href="#g157" x="232" y="715"/></g>
<g fill="#666600"><use href="#g4" x="94" y="44"/><use href="#g5" x="107" y="44"/><use href="#g0" x="120" y="44"/><use href="#g1" x="133" y="44"/><use href="#g6" x="146" y="44"/><use href="#g7" x="166" y="44"/><use href="#g8" x="179" y="44"/><use href="#g9" x="192" y="44"/><use href="#g10" x="205" y="44"/></g>
<g><rect x="15" y="11" width="2" height="1" fill="#000"/><rect x="14" y="12" width="4" height="1" fill="#000"/><rect x="13" y="13" width="2" height="1" fill="#000"/><rect x="17" y="13" width="2" height="1" fill="#000"/><rect x="12" y="14" width="2" height="1" fill="#000"/><rect x="18" y="14" width="2" height="1" fill="#000"/><rect x="11" y="15" width="2" height="1" fill="#000"/><rect x="19" y="15" width="2" height="1" fill="#000"/><rect x="10" y="16" width="2" height="1" fill="#000"/><rect x="20" y="16" width="2" height="1" fill="#000"/><rect x="11" y="17" width="2" height="1" fill="#000"/><rect x="19" y="17" width="2" height="1" fill="#000"/><rect x="12" y="18" width="2" height="1" fill="#000"/><rect x="18" y="18" width="2" height="1" fill="#000"/><rect x="13" y="19" width="2" height="1" fill="#000"/><rect x="17" y="19" width="2" height="1" fill="#000"/><rect x="14" y="20" width="4" height="1" fill="#000"/><rect x="15" y="21" width="2" height="1" fill="#000"/><rect x="74" y="45" width="2" height="1" fill="#666600"/><rect x="75" y="46" width="2" height="1" fill="#666600"/><rect x="76" y="47" width="2" height="1" fill="#666600"/><rect x="77" y="48" width="2" height="1" fill="#666600"/><rect x="78" y="49" width="2" height="1" fill="#666600"/><rect x="77" y="50" width="2" height="1" fill="#666600"/><rect x="76" y="51" width="2" height="1" fill="#666600"/><rect x="75" y="52" width="2" height="1" fill="#666600"/><rect x="74" y="53" width="2" height="1" fill="#666600"/><rect x="81" y="45" width="2" height="1" fill="#666600"/><rect x="82" y="46" width="2" height="1" fill="#666600"/><rect x="83" y="47" width="2" height="1" fill="#666600"/><rect x="84" y="48" width="2" height="1" fill="#666600"/><rect x="85" y="49" width="2" height="1" fill="#666600"/><rect x="84" y="50" width="2" height="1" fill="#666600"/><rect x="83" y="51" width="2" height="1" fill="#666600"/><rect x="82" y="52" width="2" height="1" fill="#666600"/><rect x="81" y="53" width="2" height="1" fill="#666600"/><rect x="476" y="366" width="1" height="1" fill="#000"/><rect x="477" y="365" width="1" height="1" fill="#000"/><rect x="478" y="366" width="1" height="1" fill="#000"/><rect x="479" y="367" width="1" height="1" fill="#000"/><rect x="480" y="366" width="1" height="1" fill="#000"/><rect x="480" y="367" width="1" height="1" fill="#000"/><rect x="480" y="368" width="1" height="1" fill="#000"/><rect x="481" y="363" width="1" height="1" fill="#000"/><rect x="481" y="364" width="1" height="1" fill="#000"/><rect x="481" y="365" width="1" height="1" fill="#000"/><rect x="482" y="360" width="1" height="1" fill="#000"/><rect x="482" y="361" width="1" height="1" fill="#000"/><rect x="482" y="362" width="1" height="1" fill="#000"/><rect x="476" y="387" width="1" height="1" fill="#000"/><rect x="477" y="386" width="1" height="1" fill="#000"/><rect x="478" y="387" width="1" height="1" fill="#000"/><rect x="479" y="388" width="1" height="1" fill="#000"/><rect x="480" y="387" width="1" height="1" fill="#000"/><rect x="480" y="388" width="1" height="1" fill="#000"/><rect x="480" y="389" width="1" height="1" fill="#000"/><rect x="481" y="384" width="1" height="1" fill="#000"/><rect x="481" y="385" width="1" height="1" fill="#000"/><rect x="481" y="386" width="1" height="1" fill="#000"/><rect x="482" y="381" width="1" height="1" fill="#000"/><rect x="482" y="382" width="1" height="1" fill="#000"/><rect x="482" y="383" width="1" height="1" fill="#000"/><rect x="476" y="408" width="1" height="1" fill="#000"/><rect x="477" y="407" width="1" height="1" fill="#000"/><rect x="478" y="408" width="1" height="1" fill="#000"/><rect x="479" y="409" width="1" height="1" fill="#000"/><rect x="480" y="408" width="1" height="1" fill="#000"/><rect x="480" y="409" width="1" height="1" fill="#000"/><rect x="480" y="410" width="1" height="1" fill="#000"/><rect x="481" y="405" width="1" height="1" fill="#000"/><rect x="481" y="406" width="1" height="1" fill="#000"/><rect x="481" y="407" width="1" height="1" fill="#000"/><rect x="482" y="402" width="1" height="1" fill="#000"/><rect x="482" y="403" width="1" height="1" fill="#000"/><rect x="482" y="404" width="1" height="1" fill="#000"/><rect x="476" y="429" width="1" height="1" fill="#000"/><rect x="477" y="428" width="1" height="1" fill="#000"/><rect x="478" y="429" width="1" height="1" fill="#000"/><rect x="479" y="430" width="1" height="1" fill="#000"/><rect x="480" y="429" width="1" height="1" fill="#000"/><rect x="480" y="430" width="1" height="1" fill="#000"/><rect x="480" y="431" width="1" height="1" fill="#000"/><rect x="481" y="426" width="1" height="1" fill="#000"/><rect x="481" y="427" width="1" height="1" fill="#000"/><rect x="481" y="428" width="1" height="1" fill="#000"/><rect x="482" y="423" width="1" height="1" fill="#000"/><rect x="482" y="424" width="1" height="1" fill="#000"/><rect x="482" y="425" width="1" height="1" fill="#000"/><rect x="690" y="655" width="2" height="2" fill="#a9a9a9"/><rect x="686" y="659" width="2" height="2" fill="#a9a9a9"/><rect x="690" y="659" width="2" height="2" fill="#a9a9a9"/><rect x="682" y="663" width="2" height="2" fill="#a9a9a9"/><rect x="686" y="663" width="2" height="2" fill="#a9a9a9"/><rect x="690" y="663" width="2" height="2" fill="#a9a9a9"/><rect x="686" y="477" width="2" height="1" fill="#4d6185"/><rect x="686" y="645" width="2" height="1" fill="#4d6185"/><rect x="685" y="478" width="4" height="1" fill="#4d6185"/><rect x="685" y="644" width="4" height="1" fill="#4d6185"/><rect x="684" y="479" width="6" height="1" fill="#4d6185"/><rect x="684" y="643" width="6" height="1" fill="#4d6185"/><rect x="683" y="480" width="3" height="1" fill="#4d6185"/><rect x="683" y="642" width="3" height="1" fill="#4d6185"/><rect x="688" y="480" width="3" height="1" fill="#4d6185"/><rect x="688" y="642" width="3" height="1" fill="#4d6185"/><rect x="682" y="481" width="3" height="1" fill="#4d6185"/><rect x="682" y="641" width="3" height="1" fill="#4d6185"/><rect x="689" y="481" width="3" height="1" fill="#4d6185"/><rect x="689" y="641" width="3" height="1" fill="#4d6185"/><rect x="682" y="482" width="2" height="1" fill="#4d6185"/><rect x="682" y="640" width="2" height="1" fill="#4d6185"/><rect x="690" y="482" width="2" height="1" fill="#4d6185"/><rect x="690" y="640" width="2" height="1" fill="#4d6185"/><rect x="683" y="564" width="6" height="1" fill="#eef3ff"/><rect x="684" y="565" width="6" height="1" fill="#8caaf0"/><rect x="683" y="566" width="6" height="1" fill="#eef3ff"/><rect x="684" y="567" width="6" height="1" fill="#8caaf0"/><rect x="683" y="568" width="6" height="1" fill="#eef3ff"/><rect x="684" y="569" width="6" height="1" fill="#8caaf0"/><rect x="683" y="570" width="6" height="1" fill="#eef3ff"/><rect x="684" y="571" width="6" height="1" fill="#8caaf0"/></g>
<defs><radialGradient id="rg" cx="35%" cy="30%" r="75%"><stop offset="0" stop-color="#ffffff"/><stop offset="1" stop-color="#dedcd2"/></radialGradient>
<radialGradient id="gd" cx="40%" cy="35%" r="70%"><stop offset="0" stop-color="#56d856"/><stop offset="1" stop-color="#1d9a1d"/></radialGradient></defs>
<circle cx="179.5" cy="683.5" r="6" fill="url(#rg)" stroke="#1d5086" stroke-width="1.15" shape-rendering="geometricPrecision"/>
<circle cx="236.5" cy="683.5" r="6" fill="url(#rg)" stroke="#1d5086" stroke-width="1.15" shape-rendering="geometricPrecision"/>
<circle cx="353.5" cy="683.5" r="6" fill="url(#rg)" stroke="#1d5086" stroke-width="1.15" shape-rendering="geometricPrecision"/>
<path d="M179.5 680.5 L182.5 683.5 L179.5 686.5 L176.5 683.5Z" fill="url(#gd)" shape-rendering="geometricPrecision"/>
<defs><linearGradient id="pg0" x1="0" y1="0" x2="1" y2="1"><stop offset="0" stop-color="#ff5a5a"/><stop offset="1" stop-color="#d40000"/></linearGradient><linearGradient id="pg1" x1="0" y1="0" x2="1" y2="1"><stop offset="0" stop-color="#ffb266"/><stop offset="1" stop-color="#f06a00"/></linearGradient><linearGradient id="pg2" x1="0" y1="0" x2="1" y2="1"><stop offset="0" stop-color="#fff27a"/><stop offset="1" stop-color="#e8c800"/></linearGradient><linearGradient id="pg3" x1="0" y1="0" x2="1" y2="1"><stop offset="0" stop-color="#a8e070"/><stop offset="1" stop-color="#5aa020"/></linearGradient><linearGradient id="pg4" x1="0" y1="0" x2="1" y2="1"><stop offset="0" stop-color="#7cc4ff"/><stop offset="1" stop-color="#1a78e0"/></linearGradient><linearGradient id="pg5" x1="0" y1="0" x2="1" y2="1"><stop offset="0" stop-color="#7a9cff"/><stop offset="1" stop-color="#1f3fd8"/></linearGradient><linearGradient id="pg6" x1="0" y1="0" x2="1" y2="1"><stop offset="0" stop-color="#f07aff"/><stop offset="1" stop-color="#a000c8"/></linearGradient></defs><g shape-rendering="geometricPrecision"><path d="M761.5 713.0L745.62 709.00A4.6 4.6 0 0 0 741.20 713.78A4.6 4.6 0 0 0 745.98 718.20ZM761.5 713.0L749.51 700.63A4.2 4.2 0 0 0 743.73 701.99A4.2 4.2 0 0 0 745.09 707.77ZM761.5 713.0L757.22 693.55A4.2 4.2 0 0 0 751.65 691.48A4.2 4.2 0 0 0 749.58 697.05ZM761.5 713.0L766.30 691.62A4.2 4.2 0 0 0 762.22 687.30A4.2 4.2 0 0 0 757.90 691.38ZM761.5 713.0L774.91 698.64A4.2 4.2 0 0 0 773.44 692.89A4.2 4.2 0 0 0 767.69 694.36ZM761.5 713.0L778.68 708.05A4.2 4.2 0 0 0 780.25 702.32A4.2 4.2 0 0 0 774.52 700.75ZM761.5 713.0L776.19 718.78A4.4 4.4 0 0 0 780.98 714.81A4.4 4.4 0 0 0 777.01 710.02Z" fill="#fff" stroke="#e6e6e6" stroke-width="6" stroke-linejoin="round"/><path d="M761.5 713.0L745.62 709.00A4.6 4.6 0 0 0 741.20 713.78A4.6 4.6 0 0 0 745.98 718.20ZM761.5 713.0L749.51 700.63A4.2 4.2 0 0 0 743.73 701.99A4.2 4.2 0 0 0 745.09 707.77ZM761.5 713.0L757.22 693.55A4.2 4.2 0 0 0 751.65 691.48A4.2 4.2 0 0 0 749.58 697.05ZM761.5 713.0L766.30 691.62A4.2 4.2 0 0 0 762.22 687.30A4.2 4.2 0 0 0 757.90 691.38ZM761.5 713.0L774.91 698.64A4.2 4.2 0 0 0 773.44 692.89A4.2 4.2 0 0 0 767.69 694.36ZM761.5 713.0L778.68 708.05A4.2 4.2 0 0 0 780.25 702.32A4.2 4.2 0 0 0 774.52 700.75ZM761.5 713.0L776.19 718.78A4.4 4.4 0 0 0 780.98 714.81A4.4 4.4 0 0 0 777.01 710.02Z" fill="#fff" stroke="#fff" stroke-width="4" stroke-linejoin="round"/><path d="M761.5 713.0L745.62 709.00A4.6 4.6 0 0 0 741.20 713.78A4.6 4.6 0 0 0 745.98 718.20Z" fill="url(#pg0)"/><path d="M761.5 713.0L749.51 700.63A4.2 4.2 0 0 0 743.73 701.99A4.2 4.2 0 0 0 745.09 707.77Z" fill="url(#pg1)"/><path d="M761.5 713.0L757.22 693.55A4.2 4.2 0 0 0 751.65 691.48A4.2 4.2 0 0 0 749.58 697.05Z" fill="url(#pg2)"/><path d="M761.5 713.0L766.30 691.62A4.2 4.2 0 0 0 762.22 687.30A4.2 4.2 0 0 0 757.90 691.38Z" fill="url(#pg3)"/><path d="M761.5 713.0L774.91 698.64A4.2 4.2 0 0 0 773.44 692.89A4.2 4.2 0 0 0 767.69 694.36Z" fill="url(#pg4)"/><path d="M761.5 713.0L778.68 708.05A4.2 4.2 0 0 0 780.25 702.32A4.2 4.2 0 0 0 774.52 700.75Z" fill="url(#pg5)"/><path d="M761.5 713.0L776.19 718.78A4.4 4.4 0 0 0 780.98 714.81A4.4 4.4 0 0 0 777.01 710.02Z" fill="url(#pg6)"/><ellipse cx="747.00" cy="712.52" rx="2.6" ry="1.3" transform="rotate(177.8 747.00 712.52)" fill="#fff" opacity="0.45"/><ellipse cx="748.17" cy="704.36" rx="2.6" ry="1.3" transform="rotate(-148.2 748.17 704.36)" fill="#fff" opacity="0.45"/><ellipse cx="753.32" cy="696.30" rx="2.6" ry="1.3" transform="rotate(-114.6 753.32 696.30)" fill="#fff" opacity="0.45"/><ellipse cx="761.04" cy="692.70" rx="2.6" ry="1.3" transform="rotate(-88.4 761.04 692.70)" fill="#fff" opacity="0.45"/><ellipse cx="769.18" cy="697.39" rx="2.6" ry="1.3" transform="rotate(-59.3 769.18 697.39)" fill="#fff" opacity="0.45"/><ellipse cx="773.69" cy="704.49" rx="2.6" ry="1.3" transform="rotate(-29.7 773.69 704.49)" fill="#fff" opacity="0.45"/><ellipse cx="773.41" cy="713.20" rx="2.6" ry="1.3" transform="rotate(5.3 773.41 713.20)" fill="#fff" opacity="0.45"/><g shape-rendering="crispEdges"><rect x="739" y="724" width="1" height="1" fill="#8e8e8e"/><rect x="739" y="725" width="1" height="1" fill="#8e8e8e"/><rect x="739" y="726" width="1" height="1" fill="#8e8e8e"/><rect x="739" y="727" width="1" height="1" fill="#8e8e8e"/><rect x="739" y="728" width="1" height="1" fill="#8e8e8e"/><rect x="739" y="729" width="1" height="1" fill="#8e8e8e"/><rect x="739" y="730" width="1" height="1" fill="#8e8e8e"/><rect x="740" y="724" width="1" height="1" fill="#8e8e8e"/><rect x="740" y="730" width="1" height="1" fill="#8e8e8e"/><rect x="741" y="724" width="1" height="1" fill="#8e8e8e"/><rect x="741" y="725" width="1" height="1" fill="#8e8e8e"/><rect x="741" y="727" width="1" height="1" fill="#8e8e8e"/><rect x="741" y="728" width="1" height="1" fill="#8e8e8e"/><rect x="741" y="729" width="1" height="1" fill="#8e8e8e"/><rect x="741" y="730" width="1" height="1" fill="#8e8e8e"/><rect x="742" y="725" width="1" height="1" fill="#8e8e8e"/><rect x="742" y="726" width="1" height="1" fill="#8e8e8e"/><rect x="742" y="728" width="1" height="1" fill="#8e8e8e"/><rect x="743" y="724" width="1" height="1" fill="#8e8e8e"/><rect x="743" y="725" width="1" height="1" fill="#8e8e8e"/><rect x="743" y="727" width="1" height="1" fill="#8e8e8e"/><rect x="743" y="728" width="1" height="1" fill="#8e8e8e"/><rect x="743" y="729" width="1" height="1" fill="#8e8e8e"/><rect x="743" y="730" width="1" height="1" fill="#8e8e8e"/><rect x="744" y="724" width="1" height="1" fill="#8e8e8e"/><rect x="744" y="730" width="1" height="1" fill="#8e8e8e"/><rect x="745" y="724" width="1" height="1" fill="#8e8e8e"/><rect x="745" y="725" width="1" height="1" fill="#8e8e8e"/><rect x="745" y="726" width="1" height="1" fill="#8e8e8e"/><rect x="745" y="727" width="1" height="1" fill="#8e8e8e"/><rect x="745" y="728" width="1" height="1" fill="#8e8e8e"/><rect x="745" y="729" width="1" height="1" fill="#8e8e8e"/><rect x="745" y="730" width="1" height="1" fill="#8e8e8e"/><rect x="746" y="724" width="1" height="1" fill="#8e8e8e"/><rect x="746" y="725" width="1" height="1" fill="#8e8e8e"/><rect x="746" y="726" width="1" height="1" fill="#8e8e8e"/><rect x="746" y="727" width="1" height="1" fill="#8e8e8e"/><rect x="746" y="728" width="1" height="1" fill="#8e8e8e"/><rect x="746" y="729" width="1" height="1" fill="#8e8e8e"/><rect x="746" y="730" width="1" height="1" fill="#8e8e8e"/><rect x="747" y="724" width="1" height="1" fill="#8e8e8e"/><rect x="747" y="730" width="1" height="1" fill="#8e8e8e"/><rect x="748" y="724" width="1" height="1" fill="#8e8e8e"/><rect x="748" y="726" width="1" height="1" fill="#8e8e8e"/><rect x="748" y="728" width="1" height="1" fill="#8e8e8e"/><rect x="748" y="730" width="1" height="1" fill="#8e8e8e"/><rect x="749" y="724" width="1" height="1" fill="#8e8e8e"/><rect x="749" y="726" width="1" height="1" fill="#8e8e8e"/><rect x="749" y="728" width="1" height="1" fill="#8e8e8e"/><rect x="749" y="730" width="1" height="1" fill="#8e8e8e"/><rect x="750" y="724" width="1" height="1" fill="#8e8e8e"/><rect x="750" y="725" width="1" height="1" fill="#8e8e8e"/><rect x="750" y="727" width="1" height="1" fill="#8e8e8e"/><rect x="750" y="729" width="1" height="1" fill="#8e8e8e"/><rect x="750" y="730" width="1" height="1" fill="#8e8e8e"/><rect x="751" y="725" width="1" height="1" fill="#8e8e8e"/><rect x="751" y="726" width="1" height="1" fill="#8e8e8e"/><rect x="751" y="727" width="1" height="1" fill="#8e8e8e"/><rect x="751" y="728" width="1" height="1" fill="#8e8e8e"/><rect x="751" y="729" width="1" height="1" fill="#8e8e8e"/><rect x="752" y="724" width="1" height="1" fill="#8e8e8e"/><rect x="752" y="725" width="1" height="1" fill="#8e8e8e"/><rect x="752" y="726" width="1" height="1" fill="#8e8e8e"/><rect x="752" y="727" width="1" height="1" fill="#8e8e8e"/><rect x="752" y="728" width="1" height="1" fill="#8e8e8e"/><rect x="752" y="729" width="1" height="1" fill="#8e8e8e"/><rect x="752" y="730" width="1" height="1" fill="#8e8e8e"/><rect x="753" y="724" width="1" height="1" fill="#8e8e8e"/><rect x="753" y="728" width="1" height="1" fill="#8e8e8e"/><rect x="753" y="730" width="1" height="1" fill="#8e8e8e"/><rect x="754" y="724" width="1" height="1" fill="#8e8e8e"/><rect x="754" y="726" width="1" height="1" fill="#8e8e8e"/><rect x="754" y="728" width="1" height="1" fill="#8e8e8e"/><rect x="754" y="730" width="1" height="1" fill="#8e8e8e"/><rect x="755" y="724" width="1" height="1" fill="#8e8e8e"/><rect x="755" y="726" width="1" height="1" fill="#8e8e8e"/><rect x="755" y="728" width="1" height="1" fill="#8e8e8e"/><rect x="755" y="730" width="1" height="1" fill="#8e8e8e"/><rect x="756" y="724" width="1" height="1" fill="#8e8e8e"/><rect x="756" y="726" width="1" height="1" fill="#8e8e8e"/><rect x="756" y="730" width="1" height="1" fill="#8e8e8e"/><rect x="757" y="724" width="1" height="1" fill="#8e8e8e"/><rect x="757" y="725" width="1" height="1" fill="#8e8e8e"/><rect x="757" y="726" width="1" height="1" fill="#8e8e8e"/><rect x="757" y="727" width="1" height="1" fill="#8e8e8e"/><rect x="757" y="728" width="1" height="1" fill="#8e8e8e"/><rect x="757" y="729" width="1" height="1" fill="#8e8e8e"/><rect x="757" y="730" width="1" height="1" fill="#8e8e8e"/><rect x="758" y="724" width="1" height="1" fill="#8e8e8e"/><rect x="758" y="725" width="1" height="1" fill="#8e8e8e"/><rect x="758" y="726" width="1" height="1" fill="#8e8e8e"/><rect x="758" y="727" width="1" height="1" fill="#8e8e8e"/><rect x="758" y="728" width="1" height="1" fill="#8e8e8e"/><rect x="758" y="729" width="1" height="1" fill="#8e8e8e"/><rect x="758" y="730" width="1" height="1" fill="#8e8e8e"/><rect x="759" y="724" width="1" height="1" fill="#8e8e8e"/><rect x="759" y="730" width="1" height="1" fill="#8e8e8e"/><rect x="760" y="724" width="1" height="1" fill="#8e8e8e"/><rect x="760" y="725" width="1" height="1" fill="#8e8e8e"/><rect x="760" y="726" width="1" height="1" fill="#8e8e8e"/><rect x="760" y="727" width="1" height="1" fill="#8e8e8e"/><rect x="760" y="728" width="1" height="1" fill="#8e8e8e"/><rect x="760" y="730" width="1" height="1" fill="#8e8e8e"/><rect x="761" y="724" width="1" height="1" fill="#8e8e8e"/><rect x="761" y="725" width="1" height="1" fill="#8e8e8e"/><rect x="761" y="726" width="1" height="1" fill="#8e8e8e"/><rect x="761" y="727" width="1" height="1" fill="#8e8e8e"/><rect x="761" y="728" width="1" height="1" fill="#8e8e8e"/><rect x="761" y="730" width="1" height="1" fill="#8e8e8e"/><rect x="762" y="724" width="1" height="1" fill="#8e8e8e"/><rect x="762" y="730" width="1" height="1" fill="#8e8e8e"/><rect x="763" y="724" width="1" height="1" fill="#8e8e8e"/><rect x="763" y="725" width="1" height="1" fill="#8e8e8e"/><rect x="763" y="726" width="1" height="1" fill="#8e8e8e"/><rect x="763" y="727" width="1" height="1" fill="#8e8e8e"/><rect x="763" y="728" width="1" height="1" fill="#8e8e8e"/><rect x="763" y="729" width="1" height="1" fill="#8e8e8e"/><rect x="763" y="730" width="1" height="1" fill="#8e8e8e"/><rect x="764" y="728" width="1" height="1" fill="#8e8e8e"/><rect x="764" y="729" width="1" height="1" fill="#8e8e8e"/><rect x="764" y="730" width="1" height="1" fill="#8e8e8e"/><rect x="765" y="728" width="1" height="1" fill="#8e8e8e"/><rect x="765" y="730" width="1" height="1" fill="#8e8e8e"/><rect x="766" y="728" width="1" height="1" fill="#8e8e8e"/><rect x="766" y="729" width="1" height="1" fill="#8e8e8e"/><rect x="766" y="730" width="1" height="1" fill="#8e8e8e"/><rect x="767" y="724" width="1" height="1" fill="#8e8e8e"/><rect x="767" y="725" width="1" height="1" fill="#8e8e8e"/><rect x="767" y="726" width="1" height="1" fill="#8e8e8e"/><rect x="767" y="727" width="1" height="1" fill="#8e8e8e"/><rect x="767" y="728" width="1" height="1" fill="#8e8e8e"/><rect x="767" y="729" width="1" height="1" fill="#8e8e8e"/><rect x="767" y="730" width="1" height="1" fill="#8e8e8e"/><rect x="768" y="724" width="1" height="1" fill="#8e8e8e"/><rect x="768" y="730" width="1" height="1" fill="#8e8e8e"/><rect x="769" y="724" width="1" height="1" fill="#8e8e8e"/><rect x="769" y="726" width="1" height="1" fill="#8e8e8e"/><rect x="769" y="727" width="1" height="1" fill="#8e8e8e"/><rect x="769" y="728" width="1" height="1" fill="#8e8e8e"/><rect x="769" y="730" width="1" height="1" fill="#8e8e8e"/><rect x="770" y="724" width="1" height="1" fill="#8e8e8e"/><rect x="770" y="726" width="1" height="1" fill="#8e8e8e"/><rect x="770" y="728" width="1" height="1" fill="#8e8e8e"/><rect x="770" y="730" width="1" height="1" fill="#8e8e8e"/><rect x="771" y="724" width="1" height="1" fill="#8e8e8e"/><rect x="771" y="726" width="1" height="1" fill="#8e8e8e"/><rect x="771" y="728" width="1" height="1" fill="#8e8e8e"/><rect x="771" y="730" width="1" height="1" fill="#8e8e8e"/><rect x="772" y="724" width="1" height="1" fill="#8e8e8e"/><rect x="772" y="725" width="1" height="1" fill="#8e8e8e"/><rect x="772" y="726" width="1" height="1" fill="#8e8e8e"/><rect x="772" y="728" width="1" height="1" fill="#8e8e8e"/><rect x="772" y="729" width="1" height="1" fill="#8e8e8e"/><rect x="772" y="730" width="1" height="1" fill="#8e8e8e"/><rect x="773" y="724" width="1" height="1" fill="#8e8e8e"/><rect x="773" y="725" width="1" height="1" fill="#8e8e8e"/><rect x="773" y="726" width="1" height="1" fill="#8e8e8e"/><rect x="773" y="727" width="1" height="1" fill="#8e8e8e"/><rect x="773" y="728" width="1" height="1" fill="#8e8e8e"/><rect x="773" y="729" width="1" height="1" fill="#8e8e8e"/><rect x="773" y="730" width="1" height="1" fill="#8e8e8e"/><rect x="774" y="724" width="1" height="1" fill="#8e8e8e"/><rect x="774" y="730" width="1" height="1" fill="#8e8e8e"/><rect x="775" y="724" width="1" height="1" fill="#8e8e8e"/><rect x="775" y="726" width="1" height="1" fill="#8e8e8e"/><rect x="775" y="727" width="1" height="1" fill="#8e8e8e"/><rect x="775" y="728" width="1" height="1" fill="#8e8e8e"/><rect x="775" y="730" width="1" height="1" fill="#8e8e8e"/><rect x="776" y="724" width="1" height="1" fill="#8e8e8e"/><rect x="776" y="726" width="1" height="1" fill="#8e8e8e"/><rect x="776" y="727" width="1" height="1" fill="#8e8e8e"/><rect x="776" y="728" width="1" height="1" fill="#8e8e8e"/><rect x="776" y="730" width="1" height="1" fill="#8e8e8e"/><rect x="777" y="724" width="1" height="1" fill="#8e8e8e"/><rect x="777" y="730" width="1" height="1" fill="#8e8e8e"/><rect x="778" y="724" width="1" height="1" fill="#8e8e8e"/><rect x="778" y="725" width="1" height="1" fill="#8e8e8e"/><rect x="778" y="726" width="1" height="1" fill="#8e8e8e"/><rect x="778" y="727" width="1" height="1" fill="#8e8e8e"/><rect x="778" y="728" width="1" height="1" fill="#8e8e8e"/><rect x="778" y="729" width="1" height="1" fill="#8e8e8e"/><rect x="778" y="730" width="1" height="1" fill="#8e8e8e"/><rect x="779" y="724" width="1" height="1" fill="#8e8e8e"/><rect x="779" y="725" width="1" height="1" fill="#8e8e8e"/><rect x="779" y="726" width="1" height="1" fill="#8e8e8e"/><rect x="779" y="727" width="1" height="1" fill="#8e8e8e"/><rect x="779" y="728" width="1" height="1" fill="#8e8e8e"/><rect x="779" y="729" width="1" height="1" fill="#8e8e8e"/><rect x="779" y="730" width="1" height="1" fill="#8e8e8e"/><rect x="780" y="724" width="1" height="1" fill="#8e8e8e"/><rect x="780" y="730" width="1" height="1" fill="#8e8e8e"/><rect x="781" y="724" width="1" height="1" fill="#8e8e8e"/><rect x="781" y="725" width="1" height="1" fill="#8e8e8e"/><rect x="781" y="727" width="1" height="1" fill="#8e8e8e"/><rect x="781" y="728" width="1" height="1" fill="#8e8e8e"/><rect x="781" y="729" width="1" height="1" fill="#8e8e8e"/><rect x="781" y="730" width="1" height="1" fill="#8e8e8e"/><rect x="782" y="725" width="1" height="1" fill="#8e8e8e"/><rect x="782" y="726" width="1" height="1" fill="#8e8e8e"/><rect x="782" y="728" width="1" height="1" fill="#8e8e8e"/><rect x="783" y="724" width="1" height="1" fill="#8e8e8e"/><rect x="783" y="725" width="1" height="1" fill="#8e8e8e"/><rect x="783" y="727" width="1" height="1" fill="#8e8e8e"/><rect x="783" y="728" width="1" height="1" fill="#8e8e8e"/><rect x="783" y="729" width="1" height="1" fill="#8e8e8e"/><rect x="783" y="730" width="1" height="1" fill="#8e8e8e"/><rect x="784" y="724" width="1" height="1" fill="#8e8e8e"/><rect x="784" y="730" width="1" height="1" fill="#8e8e8e"/><rect x="785" y="724" width="1" height="1" fill="#8e8e8e"/><rect x="785" y="725" width="1" height="1" fill="#8e8e8e"/><rect x="785" y="726" width="1" height="1" fill="#8e8e8e"/><rect x="785" y="727" width="1" height="1" fill="#8e8e8e"/><rect x="785" y="728" width="1" height="1" fill="#8e8e8e"/><rect x="785" y="729" width="1" height="1" fill="#8e8e8e"/><rect x="785" y="730" width="1" height="1" fill="#8e8e8e"/><rect x="740" y="725" width="1" height="1" fill="#fff"/><rect x="740" y="726" width="1" height="1" fill="#fff"/><rect x="740" y="727" width="1" height="1" fill="#fff"/><rect x="740" y="728" width="1" height="1" fill="#fff"/><rect x="740" y="729" width="1" height="1" fill="#fff"/><rect x="741" y="726" width="1" height="1" fill="#fff"/><rect x="742" y="727" width="1" height="1" fill="#fff"/><rect x="743" y="726" width="1" height="1" fill="#fff"/><rect x="744" y="725" width="1" height="1" fill="#fff"/><rect x="744" y="726" width="1" height="1" fill="#fff"/><rect x="744" y="727" width="1" height="1" fill="#fff"/><rect x="744" y="728" width="1" height="1" fill="#fff"/><rect x="744" y="729" width="1" height="1" fill="#fff"/><rect x="747" y="725" width="1" height="1" fill="#fff"/><rect x="747" y="726" width="1" height="1" fill="#fff"/><rect x="747" y="727" width="1" height="1" fill="#fff"/><rect x="747" y="728" width="1" height="1" fill="#fff"/><rect x="747" y="729" width="1" height="1" fill="#fff"/><rect x="748" y="725" width="1" height="1" fill="#fff"/><rect x="748" y="727" width="1" height="1" fill="#fff"/><rect x="748" y="729" width="1" height="1" fill="#fff"/><rect x="749" y="725" width="1" height="1" fill="#fff"/><rect x="749" y="727" width="1" height="1" fill="#fff"/><rect x="749" y="729" width="1" height="1" fill="#fff"/><rect x="750" y="726" width="1" height="1" fill="#fff"/><rect x="750" y="728" width="1" height="1" fill="#fff"/><rect x="753" y="725" width="1" height="1" fill="#fff"/><rect x="753" y="726" width="1" height="1" fill="#fff"/><rect x="753" y="727" width="1" height="1" fill="#fff"/><rect x="753" y="729" width="1" height="1" fill="#fff"/><rect x="754" y="725" width="1" height="1" fill="#fff"/><rect x="754" y="727" width="1" height="1" fill="#fff"/><rect x="754" y="729" width="1" height="1" fill="#fff"/><rect x="755" y="725" width="1" height="1" fill="#fff"/><rect x="755" y="727" width="1" height="1" fill="#fff"/><rect x="755" y="729" width="1" height="1" fill="#fff"/><rect x="756" y="725" width="1" height="1" fill="#fff"/><rect x="756" y="727" width="1" height="1" fill="#fff"/><rect x="756" y="728" width="1" height="1" fill="#fff"/><rect x="756" y="729" width="1" height="1" fill="#fff"/><rect x="759" y="725" width="1" height="1" fill="#fff"/><rect x="759" y="726" width="1" height="1" fill="#fff"/><rect x="759" y="727" width="1" height="1" fill="#fff"/><rect x="759" y="728" width="1" height="1" fill="#fff"/><rect x="759" y="729" width="1" height="1" fill="#fff"/><rect x="760" y="729" width="1" height="1" fill="#fff"/><rect x="761" y="729" width="1" height="1" fill="#fff"/><rect x="762" y="725" width="1" height="1" fill="#fff"/><rect x="762" y="726" width="1" height="1" fill="#fff"/><rect x="762" y="727" width="1" height="1" fill="#fff"/><rect x="762" y="728" width="1" height="1" fill="#fff"/><rect x="762" y="729" width="1" height="1" fill="#fff"/><rect x="765" y="729" width="1" height="1" fill="#fff"/><rect x="768" y="725" width="1" height="1" fill="#fff"/><rect x="768" y="726" width="1" height="1" fill="#fff"/><rect x="768" y="727" width="1" height="1" fill="#fff"/><rect x="768" y="728" width="1" height="1" fill="#fff"/><rect x="768" y="729" width="1" height="1" fill="#fff"/><rect x="769" y="725" width="1" height="1" fill="#fff"/><rect x="769" y="729" width="1" height="1" fill="#fff"/><rect x="770" y="725" width="1" height="1" fill="#fff"/><rect x="770" y="729" width="1" height="1" fill="#fff"/><rect x="771" y="725" width="1" height="1" fill="#fff"/><rect x="771" y="729" width="1" height="1" fill="#fff"/><rect x="774" y="725" width="1" height="1" fill="#fff"/><rect x="774" y="726" width="1" height="1" fill="#fff"/><rect x="774" y="727" width="1" height="1" fill="#fff"/><rect x="774" y="728" width="1" height="1" fill="#fff"/><rect x="774" y="729" width="1" height="1" fill="#fff"/><rect x="775" y="725" width="1" height="1" fill="#fff"/><rect x="775" y="729" width="1" height="1" fill="#fff"/><rect x="776" y="725" width="1" height="1" fill="#fff"/><rect x="776" y="729" width="1" height="1" fill="#fff"/><rect x="777" y="725" width="1" height="1" fill="#fff"/><rect x="777" y="726" width="1" height="1" fill="#fff"/><rect x="777" y="727" width="1" height="1" fill="#fff"/><rect x="777" y="728" width="1" height="1" fill="#fff"/><rect x="777" y="729" width="1" height="1" fill="#fff"/><rect x="780" y="725" width="1" height="1" fill="#fff"/><rect x="780" y="726" width="1" height="1" fill="#fff"/><rect x="780" y="727" width="1" height="1" fill="#fff"/><rect x="780" y="728" width="1" height="1" fill="#fff"/><rect x="780" y="729" width="1" height="1" fill="#fff"/><rect x="781" y="726" width="1" height="1" fill="#fff"/><rect x="782" y="727" width="1" height="1" fill="#fff"/><rect x="783" y="726" width="1" height="1" fill="#fff"/><rect x="784" y="725" width="1" height="1" fill="#fff"/><rect x="784" y="726" width="1" height="1" fill="#fff"/><rect x="784" y="727" width="1" height="1" fill="#fff"/><rect x="784" y="728" width="1" height="1" fill="#fff"/><rect x="784" y="729" width="1" height="1" fill="#fff"/></g></g>
</svg>
</body></html>
